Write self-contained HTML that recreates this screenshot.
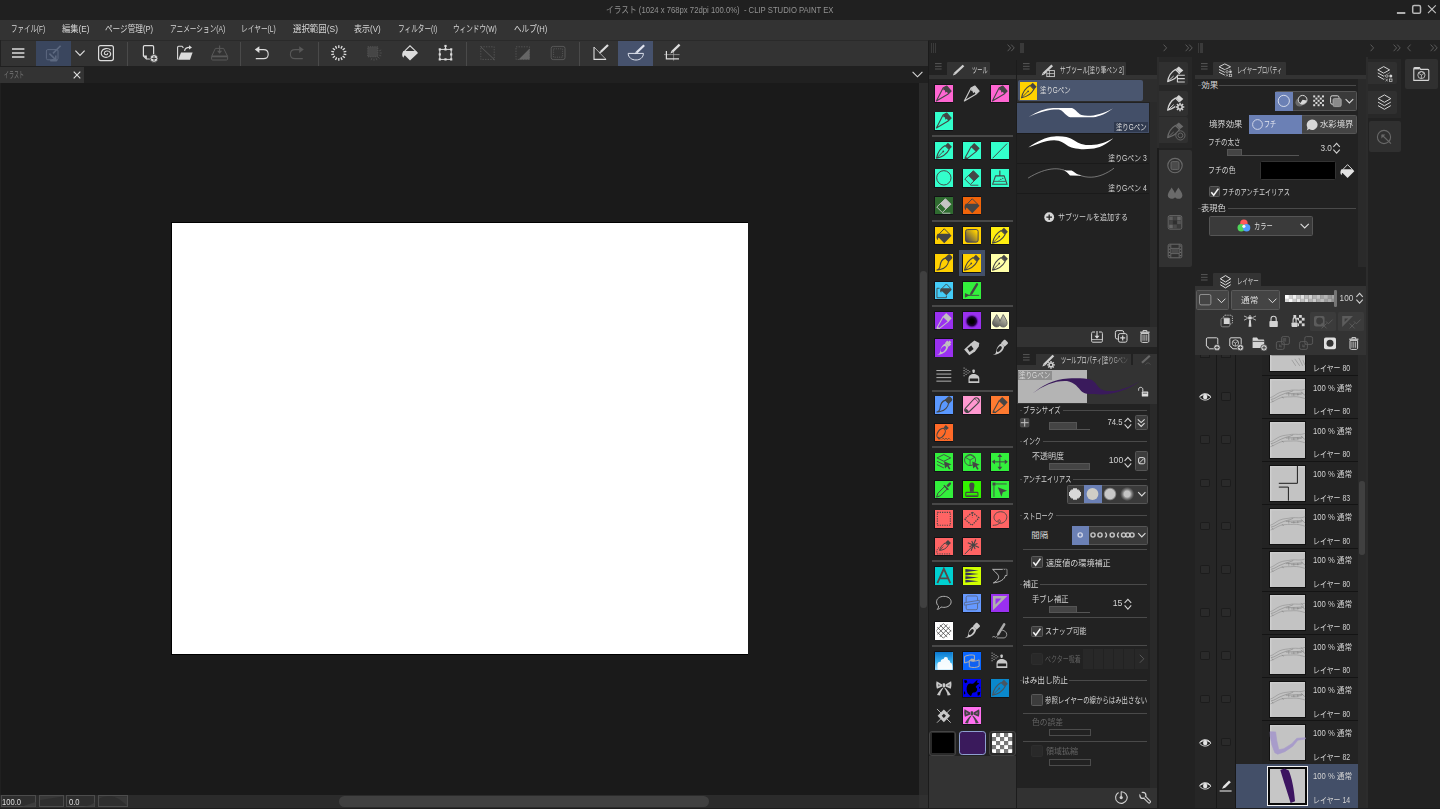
<!DOCTYPE html>
<html lang="ja"><head><meta charset="utf-8"><title>CLIP STUDIO PAINT EX</title>
<style>
html,body{margin:0;padding:0;background:#222;}
body{width:1440px;height:809px;overflow:hidden;position:relative;font-family:"Liberation Sans","Noto Sans CJK JP",sans-serif;}
#app{position:absolute;left:0;top:0;width:1440px;height:809px;overflow:hidden;background:#222;}
#app div,#app svg,#app span.t{position:absolute;box-sizing:border-box;}
#app span.t{white-space:nowrap;display:block;}
#app svg{overflow:visible;}
</style></head><body><div id="app">
<div style="left:0.00px;top:0.00px;width:1440.00px;height:19.70px;background:#202020;"></div>
<span class="t" style="top:3.70px;font-size:9px;line-height:12.60px;color:#929292;left:606.40px;transform-origin:0 50%;transform:scaleX(0.857);">イラスト (1024 x 768px 72dpi 100.0%)&nbsp; - CLIP STUDIO PAINT EX</span>
<svg style="left:1394.00px;top:3.00px;" width="44.00" height="14.00" viewBox="0 0 44 14"><path d="M2.9 10h8.4" stroke="#b8b8b8" stroke-width="1.9"/><rect x="18.7" y="2.5" width="7.8" height="7.8" rx="1.4" fill="none" stroke="#b8b8b8" stroke-width="1.5"/><path d="M34 2.4l7.8 7.8m0-7.8l-7.8 7.8" stroke="#c4c4c4" stroke-width="1.1"/></svg>
<div style="left:0.00px;top:19.70px;width:1440.00px;height:20.60px;background:#333;"></div>
<span class="t" style="top:23.16px;font-size:9.2px;line-height:12.88px;color:#d6d6d6;left:11.25px;transform-origin:0 50%;transform:scaleX(0.703);">ファイル(F)</span>
<span class="t" style="top:23.16px;font-size:9.2px;line-height:12.88px;color:#d6d6d6;left:61.75px;transform-origin:0 50%;transform:scaleX(0.895);">編集(E)</span>
<span class="t" style="top:23.16px;font-size:9.2px;line-height:12.88px;color:#d6d6d6;left:105.00px;transform-origin:0 50%;transform:scaleX(0.828);">ページ管理(P)</span>
<span class="t" style="top:23.16px;font-size:9.2px;line-height:12.88px;color:#d6d6d6;left:170.00px;transform-origin:0 50%;transform:scaleX(0.724);">アニメーション(A)</span>
<span class="t" style="top:23.16px;font-size:9.2px;line-height:12.88px;color:#d6d6d6;left:241.25px;transform-origin:0 50%;transform:scaleX(0.729);">レイヤー(L)</span>
<span class="t" style="top:23.16px;font-size:9.2px;line-height:12.88px;color:#d6d6d6;left:292.50px;transform-origin:0 50%;transform:scaleX(0.918);">選択範囲(S)</span>
<span class="t" style="top:23.16px;font-size:9.2px;line-height:12.88px;color:#d6d6d6;left:354.00px;transform-origin:0 50%;transform:scaleX(0.871);">表示(V)</span>
<span class="t" style="top:23.16px;font-size:9.2px;line-height:12.88px;color:#d6d6d6;left:397.50px;transform-origin:0 50%;transform:scaleX(0.722);">フィルター(I)</span>
<span class="t" style="top:23.16px;font-size:9.2px;line-height:12.88px;color:#d6d6d6;left:452.50px;transform-origin:0 50%;transform:scaleX(0.721);">ウィンドウ(W)</span>
<span class="t" style="top:23.16px;font-size:9.2px;line-height:12.88px;color:#d6d6d6;left:513.50px;transform-origin:0 50%;transform:scaleX(0.825);">ヘルプ(H)</span>
<div style="left:0.00px;top:40.30px;width:927.70px;height:25.90px;background:#333;border-top:0.8px solid #2a2a2a;"></div>
<div style="left:0.00px;top:40.00px;width:1.00px;height:26.00px;background:#222;"></div>
<div style="left:36.00px;top:40.80px;width:35.30px;height:25.20px;background:#3a465e;"></div>
<div style="left:618.30px;top:40.80px;width:35.00px;height:25.20px;background:#46526d;"></div>
<div style="left:127.10px;top:41.50px;width:0.90px;height:24.00px;background:#4a4a4a;"></div>
<div style="left:240.10px;top:41.50px;width:0.90px;height:24.00px;background:#4a4a4a;"></div>
<div style="left:317.60px;top:41.50px;width:0.90px;height:24.00px;background:#4a4a4a;"></div>
<div style="left:466.40px;top:41.50px;width:0.90px;height:24.00px;background:#4a4a4a;"></div>
<div style="left:579.10px;top:41.50px;width:0.90px;height:24.00px;background:#4a4a4a;"></div>
<svg style="left:0.00px;top:0.00px;" width="1440.00" height="809.00" viewBox="0 0 1440 809"><path d="M12 49h12.4M12 53h12.4M12 57h12.4" stroke="#dcdcdc" stroke-width="1.5"/><rect x="46.4" y="49.6" width="11.6" height="10.2" rx="1.4" fill="none" stroke="#5d6980" stroke-width="1"/><path d="M53 53.4L60.6 45.8" stroke="#5d6980" stroke-width="1.6"/><path d="M49.4 53.6L55.6 59.6M55.8 55.6V59.8H51.6" fill="none" stroke="#5d6980" stroke-width="1.5"/><path d="M50 59.8h8l-1.4 1.6h-6.2z" fill="#5d6980"/><path d="M75.4 50.6L80 55.4L84.6 50.6" fill="none" stroke="#dcdcdc" stroke-width="1.2"/><rect x="98.6" y="45.6" width="14.8" height="15" rx="2" fill="none" stroke="#dcdcdc" stroke-width="1.2"/><path d="M110.6 50.2C108.6 47.6 102.6 48 101.4 52.2C100.4 56.4 105.6 58.8 109.2 56.4C112.2 54.2 110.2 50.6 106.6 51C103.8 51.4 103.6 54.6 106 54.8C107.2 54.8 107.8 54 107.6 53.2" fill="none" stroke="#dcdcdc" stroke-width="1.1"/><path d="M146.4 59H152.6C153.2 59 153.6 58.6 153.6 58V46.8C153.6 46 153.2 45.6 152.4 45.6H144.6C143.8 45.6 143.4 46 143.4 46.8V56z" fill="none" stroke="#dcdcdc" stroke-width="1.2"/><path d="M143.4 55.6H146.8V59z" fill="#dcdcdc"/><circle cx="154" cy="58.4" r="3.9" fill="#dcdcdc" stroke="#333" stroke-width="0.8"/><path d="M154 56v4.8M151.6 58.4h4.8" stroke="#333" stroke-width="1"/><path d="M177.6 59.4V47.2C177.6 46.6 178 46.2 178.6 46.2H182L183.4 47.8" fill="none" stroke="#dcdcdc" stroke-width="1.1"/><path d="M178.2 59.8L181 52.4H192.6L190 59.8z" fill="#dcdcdc"/><path d="M184.6 51C184.8 48.6 186.6 47.4 189.6 47.4" fill="none" stroke="#dcdcdc" stroke-width="1.1"/><path d="M189 45.2L192 47.4L189 49.6z" fill="#dcdcdc"/><path d="M211.6 56.4L215.4 48.4H223.6L227.6 56.4V59C227.6 59.6 227.2 60 226.6 60H212.6C212 60 211.6 59.6 211.6 59z" fill="none" stroke="#585858" stroke-width="1"/><path d="M212 56.4H227.4" stroke="#585858" stroke-width="1.8"/><path d="M219.6 45.6V52.6" stroke="#585858" stroke-width="1.1"/><path d="M217 50.8L219.6 53.8L222.2 50.8z" fill="#585858"/><path d="M255.8 58.6H263.6C266.6 58.6 268.2 56.6 268.2 54.2C268.2 51.6 266.4 49.6 263.6 49.6H259" fill="none" stroke="#dcdcdc" stroke-width="1.1"/><path d="M254.8 49.6L259.4 46.2V53z" fill="#dcdcdc"/><path d="M302.8 58.6H295C292 58.6 290.4 56.6 290.4 54.2C290.4 51.6 292.2 49.6 295 49.6H299.6" fill="none" stroke="#585858" stroke-width="1.1"/><path d="M303.8 49.6L299.2 46.2V53z" fill="#585858"/><path d="M343.58 54.09L346.31 54.71" stroke="#dcdcdc" stroke-width="1.35"/><path d="M342.63 56.06L344.82 57.80" stroke="#dcdcdc" stroke-width="1.35"/><path d="M340.93 57.41L342.14 59.94" stroke="#dcdcdc" stroke-width="1.35"/><path d="M338.80 57.90L338.80 60.70" stroke="#dcdcdc" stroke-width="1.35"/><path d="M336.67 57.41L335.46 59.94" stroke="#dcdcdc" stroke-width="1.35"/><path d="M334.97 56.06L332.78 57.80" stroke="#dcdcdc" stroke-width="1.35"/><path d="M334.02 54.09L331.29 54.71" stroke="#dcdcdc" stroke-width="1.35"/><path d="M334.02 51.91L331.29 51.29" stroke="#dcdcdc" stroke-width="1.35"/><path d="M334.97 49.94L332.78 48.20" stroke="#dcdcdc" stroke-width="1.35"/><path d="M336.67 48.59L335.46 46.06" stroke="#dcdcdc" stroke-width="1.35"/><path d="M338.80 48.10L338.80 45.30" stroke="#dcdcdc" stroke-width="1.35"/><path d="M340.93 48.59L342.14 46.06" stroke="#dcdcdc" stroke-width="1.35"/><path d="M342.63 49.94L344.82 48.20" stroke="#dcdcdc" stroke-width="1.35"/><path d="M343.58 51.91L346.31 51.29" stroke="#dcdcdc" stroke-width="1.35"/><rect x="367.8" y="46.8" width="10" height="10" fill="#464646" stroke="#585858" stroke-width="0.9" stroke-dasharray="1.2 1"/><path d="M379.17 50.86L381.21 50.02" stroke="#4c4c4c" stroke-width="1"/><path d="M379.60 53.00L381.80 53.00" stroke="#4c4c4c" stroke-width="1"/><path d="M379.17 55.14L381.21 55.98" stroke="#4c4c4c" stroke-width="1"/><path d="M377.96 56.96L379.52 58.52" stroke="#4c4c4c" stroke-width="1"/><path d="M376.14 58.17L376.98 60.21" stroke="#4c4c4c" stroke-width="1"/><path d="M374.00 58.60L374.00 60.80" stroke="#4c4c4c" stroke-width="1"/><path d="M371.86 58.17L371.02 60.21" stroke="#4c4c4c" stroke-width="1"/><path d="M404.6 51.2L410 45.8L415.6 51.2" fill="none" stroke="#dcdcdc" stroke-width="1.1"/><path d="M403.4 51H416.4L418 53L410 60.6L405 55.6C404.2 55 403.8 55.8 403.8 57.6C402 57 401.6 53.4 403.4 51z" fill="#dcdcdc"/><rect x="439.8" y="49.4" width="11.4" height="10" fill="none" stroke="#dcdcdc" stroke-width="1"/><path d="M445.5 49.4V46.4" stroke="#dcdcdc" stroke-width="1"/><rect x="438.7" y="48.3" width="2.2" height="2.2" fill="#dcdcdc"/><rect x="444.4" y="48.3" width="2.2" height="2.2" fill="#dcdcdc"/><rect x="450.09999999999997" y="48.3" width="2.2" height="2.2" fill="#dcdcdc"/><rect x="438.7" y="53.3" width="2.2" height="2.2" fill="#dcdcdc"/><rect x="450.09999999999997" y="53.3" width="2.2" height="2.2" fill="#dcdcdc"/><rect x="438.7" y="58.3" width="2.2" height="2.2" fill="#dcdcdc"/><rect x="444.4" y="58.3" width="2.2" height="2.2" fill="#dcdcdc"/><rect x="450.09999999999997" y="58.3" width="2.2" height="2.2" fill="#dcdcdc"/><rect x="444.4" y="44.9" width="2.2" height="2.2" fill="#dcdcdc"/><rect x="480.8" y="46.8" width="13.4" height="12.6" fill="none" stroke="#585858" stroke-width="0.9" stroke-dasharray="1.3 1.3"/><path d="M480.4 46.4L494.8 60" stroke="#585858" stroke-width="1"/><rect x="516" y="46.8" width="13.4" height="12.6" fill="none" stroke="#585858" stroke-width="0.9" stroke-dasharray="1.3 1.3"/><path d="M529.6 48.6V59.6H518.6z" fill="#666"/><rect x="551.2" y="46.4" width="13.8" height="13.2" rx="2" fill="none" stroke="#585858" stroke-width="1"/><rect x="553.6" y="48.8" width="9" height="8.4" fill="none" stroke="#585858" stroke-width="0.9" stroke-dasharray="1.1 1.1"/><path d="M594 47V59.4H606" fill="none" stroke="#dcdcdc" stroke-width="1.1"/><path d="M594 47L606 59.4" stroke="#dcdcdc" stroke-width="0.7"/><path d="M600.9 51.8L608.0 45.0" stroke="#dcdcdc" stroke-width="2.2" stroke-linecap="butt"/><path d="M599.0 53.6L601.6 52.6L600.1 51.0z" fill="#dcdcdc"/><path d="M628.2 53.4H643.4C643.4 57.4 640.2 60 636 60C631.6 60 628.2 57.4 628.2 53.4z" fill="none" stroke="#dfe3ee" stroke-width="1"/><path d="M636.7 52.4L644.2 45.2" stroke="#dfe3ee" stroke-width="2.2" stroke-linecap="butt"/><path d="M634.8 54.2L637.4 53.2L635.9 51.6z" fill="#dfe3ee"/><path d="M664 54.6H679.6M673.6 50.8V60.6" fill="none" stroke="#a8a8a8" stroke-width="0.7"/><path d="M666.4 51V58.8H679" fill="none" stroke="#dcdcdc" stroke-width="1.2"/><path d="M672.3 51.6L679.6 44.6" stroke="#dcdcdc" stroke-width="2.2" stroke-linecap="butt"/><path d="M670.4 53.4L673.0 52.4L671.5 50.8z" fill="#dcdcdc"/></svg>
<div style="left:0.00px;top:66.20px;width:927.70px;height:17.20px;background:#202020;"></div>
<div style="left:0.00px;top:67.00px;width:84.30px;height:16.40px;background:#333;"></div>
<span class="t" style="top:69.10px;font-size:9px;line-height:12.60px;color:#7a7a7a;left:3.75px;transform-origin:0 50%;transform:scaleX(0.556);">イラスト</span>
<svg style="left:72.50px;top:71.20px;" width="8.00" height="8.00" viewBox="0 0 8 8"><path d="M0.7 0.7l6.6 6.6m0-6.6l-6.6 6.6" stroke="#e0e0e0" stroke-width="1.1" fill="none"/></svg>
<svg style="left:911.80px;top:70.90px;" width="11.00" height="7.00" viewBox="0 0 11 7"><path d="M0.6 0.8l4.9 5 4.9-5" stroke="#d8d8d8" stroke-width="1.1" fill="none"/></svg>
<div style="left:0.00px;top:83.40px;width:919.00px;height:711.60px;background:#1a1a1a;"></div>
<div style="left:0.00px;top:83.00px;width:1.00px;height:712.00px;background:#202020;"></div>
<div style="left:171.20px;top:222.00px;width:577.00px;height:433.00px;background:#000;"></div>
<div style="left:171.90px;top:222.70px;width:575.80px;height:431.70px;background:#fff;"></div>
<div style="left:918.70px;top:83.40px;width:9.50px;height:725.60px;background:#2b2b2b;"></div>
<div style="left:919.80px;top:271.00px;width:7.00px;height:336.50px;background:#404040;border-radius:3.5px;"></div>
<div style="left:0.00px;top:794.80px;width:919.00px;height:14.00px;background:#2b2b2b;"></div>
<div style="left:919.00px;top:794.80px;width:8.60px;height:14.00px;background:#303030;"></div>
<div style="left:0.00px;top:807.50px;width:928.00px;height:1.50px;background:#1d1d1d;"></div>
<div style="left:339.00px;top:795.60px;width:370.00px;height:11.20px;background:#404040;border-radius:5.6px;"></div>
<div style="left:1.40px;top:795.40px;width:34.80px;height:11.80px;background:#2e2e2e;border:0.8px solid #4c4c4c;"></div>
<div style="left:38.80px;top:795.40px;width:25.40px;height:11.80px;background:#2e2e2e;border:0.8px solid #4c4c4c;"></div>
<div style="left:65.80px;top:795.40px;width:29.60px;height:11.80px;background:#2e2e2e;border:0.8px solid #4c4c4c;"></div>
<div style="left:97.80px;top:795.40px;width:30.60px;height:11.80px;background:#2e2e2e;border:0.8px solid #4c4c4c;"></div>
<svg style="left:2.00px;top:796.00px;" width="34.00" height="11.00" viewBox="0 0 34 11"><path d="M20 10.5L33.5 6V10.5z" fill="#3c3c3c"/></svg>
<svg style="left:39.00px;top:796.00px;" width="25.00" height="11.00" viewBox="0 0 25 11"><path d="M1 4L24 0.5V0H1z" fill="#383838"/></svg>
<svg style="left:66.00px;top:796.00px;" width="29.00" height="11.00" viewBox="0 0 29 11"><path d="M17 10.5C24 10 27 8 28.5 6V10.5z" fill="#3c3c3c"/></svg>
<svg style="left:98.00px;top:796.00px;" width="30.00" height="11.00" viewBox="0 0 30 11"><path d="M1 3C4 0 14 0 18 1.5C22 3 26 7 29 10V0.5H1z" fill="#383838"/></svg>
<span class="t" style="top:796.10px;font-size:9px;line-height:12.60px;color:#ddd;left:2.20px;transform-origin:0 50%;transform:scaleX(0.848);">100.0</span>
<span class="t" style="top:796.10px;font-size:9px;line-height:12.60px;color:#ddd;left:68.90px;transform-origin:0 50%;transform:scaleX(0.846);">0.0</span>
<div style="left:927.70px;top:40.30px;width:512.30px;height:769.00px;background:#222;"></div>
<div style="left:927.60px;top:40.50px;width:1.60px;height:769.00px;background:#1b1b1b;"></div>
<div style="left:931.20px;top:43.20px;width:1.20px;height:9.60px;background:#3a3a3a;"></div>
<div style="left:933.10px;top:43.20px;width:1.20px;height:9.60px;background:#3a3a3a;"></div>
<div style="left:935.00px;top:43.20px;width:1.20px;height:9.60px;background:#3a3a3a;"></div>
<div style="left:1019.50px;top:43.20px;width:1.20px;height:9.60px;background:#3a3a3a;"></div>
<div style="left:1021.40px;top:43.20px;width:1.20px;height:9.60px;background:#3a3a3a;"></div>
<div style="left:1023.30px;top:43.20px;width:1.20px;height:9.60px;background:#3a3a3a;"></div>
<div style="left:1197.60px;top:43.20px;width:1.20px;height:9.60px;background:#3a3a3a;"></div>
<div style="left:1199.50px;top:43.20px;width:1.20px;height:9.60px;background:#3a3a3a;"></div>
<div style="left:1201.40px;top:43.20px;width:1.20px;height:9.60px;background:#3a3a3a;"></div>
<svg style="left:1007.00px;top:44.10px;" width="10.00" height="8.00" viewBox="0 0 10 8"><path d="M0.6 0.6L3.6 3.9L0.6 7.2M4.2 0.6L7.2 3.9L4.2 7.2" stroke="#5a5a5a" stroke-width="1" fill="none"/></svg>
<svg style="left:1162.50px;top:44.10px;" width="10.00" height="8.00" viewBox="0 0 10 8"><path d="M0.6 0.6L3.6 3.9L0.6 7.2" stroke="#5a5a5a" stroke-width="1" fill="none"/></svg>
<svg style="left:1184.50px;top:44.10px;" width="10.00" height="8.00" viewBox="0 0 10 8"><path d="M0.6 0.6L3.6 3.9L0.6 7.2M4.2 0.6L7.2 3.9L4.2 7.2" stroke="#5a5a5a" stroke-width="1" fill="none"/></svg>
<svg style="left:1369.80px;top:44.10px;" width="10.00" height="8.00" viewBox="0 0 10 8"><path d="M0.6 0.6L3.6 3.9L0.6 7.2" stroke="#5a5a5a" stroke-width="1" fill="none"/></svg>
<svg style="left:1392.80px;top:44.10px;" width="10.00" height="8.00" viewBox="0 0 10 8"><path d="M0.6 0.6L3.6 3.9L0.6 7.2M4.2 0.6L7.2 3.9L4.2 7.2" stroke="#5a5a5a" stroke-width="1" fill="none"/></svg>
<svg style="left:1407.00px;top:44.10px;" width="10.00" height="8.00" viewBox="0 0 10 8"><path d="M3.6 0.6L0.6 3.9L3.6 7.2" stroke="#5a5a5a" stroke-width="1" fill="none"/></svg>
<svg style="left:1429.50px;top:44.10px;" width="10.00" height="8.00" viewBox="0 0 10 8"><path d="M0.6 0.6L3.6 3.9L0.6 7.2M4.2 0.6L7.2 3.9L4.2 7.2" stroke="#5a5a5a" stroke-width="1" fill="none"/></svg>
<svg style="left:935.00px;top:63.00px;" width="7.00" height="7.00" viewBox="0 0 7 7"><path d="M0 0.6h6.6M0 3.3h6.6M0 6h6.6" stroke="#5c5c5c" stroke-width="0.9"/></svg>
<div style="left:947.00px;top:62.00px;width:42.50px;height:14.00px;background:#333;border-radius:1px 1px 0 0;"></div>
<div style="left:928.70px;top:75.00px;width:87.60px;height:4.40px;background:#333;"></div>
<svg style="left:0.00px;top:0.00px;" width="1440.00" height="809.00" viewBox="0 0 1440 809"><path d="M954.8 73.7L963.5 65.5" stroke="#cfcfcf" stroke-width="2.4" stroke-linecap="butt"/><path d="M952.9 75.5L955.6 74.6L954.0 72.8z" fill="#cfcfcf"/></svg>
<span class="t" style="top:64.72px;font-size:8.4px;line-height:11.76px;color:#cfcfcf;left:971.50px;transform-origin:0 50%;transform:scaleX(0.620);">ツール</span>
<div style="left:929.20px;top:756.40px;width:87.00px;height:52.00px;background:#333;"></div>
<div style="left:932.00px;top:135.20px;width:81.30px;height:1.60px;background:#484848;"></div>
<div style="left:932.00px;top:220.40px;width:81.30px;height:1.60px;background:#484848;"></div>
<div style="left:932.00px;top:305.40px;width:81.30px;height:1.60px;background:#484848;"></div>
<div style="left:932.00px;top:390.00px;width:81.30px;height:1.60px;background:#484848;"></div>
<div style="left:932.00px;top:446.40px;width:81.30px;height:1.60px;background:#484848;"></div>
<div style="left:932.00px;top:503.20px;width:81.30px;height:1.60px;background:#484848;"></div>
<div style="left:932.00px;top:560.00px;width:81.30px;height:1.60px;background:#484848;"></div>
<div style="left:932.00px;top:645.00px;width:81.30px;height:1.60px;background:#484848;"></div>
<div style="left:959.00px;top:250.00px;width:26.30px;height:26.30px;background:#435069;"></div>
<div style="left:934.20px;top:84.00px;width:19.10px;height:19.10px;background:#121216;border-radius:1px;"></div>
<div style="left:934.90px;top:84.70px;width:17.70px;height:17.70px;background:#ff66d2;"></div>
<svg style="left:934.90px;top:84.70px;" width="17.70" height="17.70" viewBox="0 0 18 18"><path d="M1.4 16.2L8.2 3L12 1L16.4 6.2L13 9.4z" fill="none" stroke="#454545" stroke-width="1.1" stroke-linejoin="round"/><path d="M8.4 2.8L12 1L16.4 6.2L13.4 9L12 6.8L10.8 7.8L9.8 5.2L8.6 5.4z" fill="#454545"/></svg>
<svg style="left:963.00px;top:84.70px;" width="17.70" height="17.70" viewBox="0 0 18 18"><path d="M1.4 16.2L8.2 3L12 1L16.4 6.2L13 9.4z" fill="none" stroke="#c8c8c8" stroke-width="1.2" stroke-linejoin="round"/><path d="M8.2 3L12 1L16.4 6.2L13 9.4L11.6 7.2L10.4 8.4L9.4 5.8L8.4 6z" fill="#c8c8c8"/></svg>
<div style="left:990.40px;top:84.00px;width:19.10px;height:19.10px;background:#121216;border-radius:1px;"></div>
<div style="left:991.10px;top:84.70px;width:17.70px;height:17.70px;background:#ff66d2;"></div>
<svg style="left:991.10px;top:84.70px;" width="17.70" height="17.70" viewBox="0 0 18 18"><path d="M1.4 16.2L8.2 3L12 1L16.4 6.2L13 9.4z" fill="none" stroke="#454545" stroke-width="1.1" stroke-linejoin="round"/><path d="M8.4 2.8L12 1L16.4 6.2L13.4 9L12 6.8L10.8 7.8L9.8 5.2L8.6 5.4z" fill="#454545"/></svg>
<div style="left:934.20px;top:111.60px;width:19.10px;height:19.10px;background:#121216;border-radius:1px;"></div>
<div style="left:934.90px;top:112.30px;width:17.70px;height:17.70px;background:#33ffcc;"></div>
<svg style="left:934.90px;top:112.30px;" width="17.70" height="17.70" viewBox="0 0 18 18"><path d="M1.4 16.2L8.2 3L12 1L16.4 6.2L13 9.4z" fill="none" stroke="#454545" stroke-width="1.1" stroke-linejoin="round"/><path d="M8.4 2.8L12 1L16.4 6.2L13.4 9L12 6.8L10.8 7.8L9.8 5.2L8.6 5.4z" fill="#454545"/></svg>
<div style="left:934.20px;top:141.00px;width:19.10px;height:19.10px;background:#121216;border-radius:1px;"></div>
<div style="left:934.90px;top:141.70px;width:17.70px;height:17.70px;background:#33ffcc;"></div>
<svg style="left:934.90px;top:141.70px;" width="17.70" height="17.70" viewBox="0 0 18 18"><path d="M1.6 16.4C2.6 11 6 6 10.4 3.6L14.4 7.6C12 12 7 15.4 1.6 16.4z" fill="none" stroke="#454545" stroke-width="1.1" stroke-linejoin="round"/><path d="M2 16L8 10" stroke="#454545" stroke-width="0.9"/><circle cx="8.4" cy="9.6" r="0.9" fill="#454545"/><path d="M10.6 3.2L13.2 0.8L17.2 4.8L14.8 7.4z" fill="#454545"/></svg>
<div style="left:962.30px;top:141.00px;width:19.10px;height:19.10px;background:#121216;border-radius:1px;"></div>
<div style="left:963.00px;top:141.70px;width:17.70px;height:17.70px;background:#33ffcc;"></div>
<svg style="left:963.00px;top:141.70px;" width="17.70" height="17.70" viewBox="0 0 18 18"><path d="M2.2 15.8L8.4 4.6L13.6 9.6L4.6 16.6z" fill="none" stroke="#454545" stroke-width="1.1" stroke-linejoin="round"/><path d="M8.2 4.4L11.4 1L17 6.4L13.8 9.8z" fill="#454545"/><path d="M1.6 16.8H5" stroke="#454545" stroke-width="1.1"/></svg>
<div style="left:990.40px;top:141.00px;width:19.10px;height:19.10px;background:#121216;border-radius:1px;"></div>
<div style="left:991.10px;top:141.70px;width:17.70px;height:17.70px;background:#33ffcc;"></div>
<svg style="left:991.10px;top:141.70px;" width="17.70" height="17.70" viewBox="0 0 18 18"><path d="M1.6 16.6L16.4 1.6" stroke="#454545" stroke-width="1"/></svg>
<div style="left:934.20px;top:168.50px;width:19.10px;height:19.10px;background:#121216;border-radius:1px;"></div>
<div style="left:934.90px;top:169.20px;width:17.70px;height:17.70px;background:#33ffcc;"></div>
<svg style="left:934.90px;top:169.20px;" width="17.70" height="17.70" viewBox="0 0 18 18"><circle cx="9" cy="9" r="7.3" fill="none" stroke="#454545" stroke-width="1"/></svg>
<div style="left:962.30px;top:168.50px;width:19.10px;height:19.10px;background:#121216;border-radius:1px;"></div>
<div style="left:963.00px;top:169.20px;width:17.70px;height:17.70px;background:#33ffcc;"></div>
<svg style="left:963.00px;top:169.20px;" width="17.70" height="17.70" viewBox="0 0 18 18"><path d="M10.6 1.8L16.2 7.4L7.4 15.8L1.8 10.2z" fill="none" stroke="#454545" stroke-width="1" stroke-linejoin="round"/><path d="M10.6 1.8L16.2 7.4L11 12.4L5.4 6.8z" fill="#454545"/><path d="M7.6 16.5H15.6" stroke="#454545" stroke-width="0.9"/></svg>
<div style="left:990.40px;top:168.50px;width:19.10px;height:19.10px;background:#121216;border-radius:1px;"></div>
<div style="left:991.10px;top:169.20px;width:17.70px;height:17.70px;background:#33ffcc;"></div>
<svg style="left:991.10px;top:169.20px;" width="17.70" height="17.70" viewBox="0 0 18 18"><path d="M9 1.6V7" stroke="#454545" stroke-width="1.2"/><path d="M4.6 7H13.4L16.4 15.6H1.6z" fill="none" stroke="#454545" stroke-width="1.1" stroke-linejoin="round"/><path d="M3 12.6H15" stroke="#454545" stroke-width="0.8"/><circle cx="10" cy="10.6" r="0.6" fill="#454545"/><circle cx="12" cy="9.6" r="0.6" fill="#454545"/><circle cx="8.2" cy="11.4" r="0.5" fill="#454545"/></svg>
<div style="left:934.20px;top:196.10px;width:19.10px;height:19.10px;background:#121216;border-radius:1px;"></div>
<div style="left:934.90px;top:196.80px;width:17.70px;height:17.70px;background:#2f6b30;"></div>
<svg style="left:934.90px;top:196.80px;" width="17.70" height="17.70" viewBox="0 0 18 18"><path d="M10.6 1.8L16.2 7.4L7.4 15.8L1.8 10.2z" fill="none" stroke="#c4c4c4" stroke-width="1" stroke-linejoin="round"/><path d="M10.6 1.8L16.2 7.4L11 12.4L5.4 6.8z" fill="#c4c4c4"/><path d="M7.6 16.5H15.6" stroke="#c4c4c4" stroke-width="0.9"/></svg>
<div style="left:962.30px;top:196.10px;width:19.10px;height:19.10px;background:#121216;border-radius:1px;"></div>
<div style="left:963.00px;top:196.80px;width:17.70px;height:17.70px;background:#f0640a;"></div>
<svg style="left:963.00px;top:196.80px;" width="17.70" height="17.70" viewBox="0 0 18 18"><path d="M4.4 7L9.4 1.8L14.6 7" fill="none" stroke="#454545" stroke-width="1" stroke-linejoin="round"/><path d="M2.8 6.8H15L16.8 9L9.4 16.6L4.2 11.2C3.4 10.6 3 11.4 3 13.2C1.4 12.6 1 9 2.8 6.8z" fill="#454545"/></svg>
<div style="left:934.20px;top:226.10px;width:19.10px;height:19.10px;background:#121216;border-radius:1px;"></div>
<div style="left:934.90px;top:226.80px;width:17.70px;height:17.70px;background:#ffd000;"></div>
<svg style="left:934.90px;top:226.80px;" width="17.70" height="17.70" viewBox="0 0 18 18"><path d="M4.4 7L9.4 1.8L14.6 7" fill="none" stroke="#454545" stroke-width="1" stroke-linejoin="round"/><path d="M2.8 6.8H15L16.8 9L9.4 16.6L4.2 11.2C3.4 10.6 3 11.4 3 13.2C1.4 12.6 1 9 2.8 6.8z" fill="#454545"/></svg>
<div style="left:962.30px;top:226.10px;width:19.10px;height:19.10px;background:#121216;border-radius:1px;"></div>
<div style="left:963.00px;top:226.80px;width:17.70px;height:17.70px;background:#ffd000;"></div>
<svg style="left:963.00px;top:226.80px;" width="17.70" height="17.70" viewBox="0 0 18 18"><defs><linearGradient id="gg" x1="0" y1="1" x2="1" y2="0"><stop offset="0" stop-color="#3a3a5a"/><stop offset="0.85" stop-color="#3a3a5a" stop-opacity="0"/></linearGradient></defs><rect x="2.6" y="2.6" width="12.8" height="12.8" rx="2" fill="url(#gg)" stroke="#3a3a5a" stroke-width="0.9"/></svg>
<div style="left:990.40px;top:226.10px;width:19.10px;height:19.10px;background:#121216;border-radius:1px;"></div>
<div style="left:991.10px;top:226.80px;width:17.70px;height:17.70px;background:#ffee10;"></div>
<svg style="left:991.10px;top:226.80px;" width="17.70" height="17.70" viewBox="0 0 18 18"><path d="M1.6 16.4C2.6 11 6 6 10.4 3.6L14.4 7.6C12 12 7 15.4 1.6 16.4z" fill="none" stroke="#454545" stroke-width="1.1" stroke-linejoin="round"/><path d="M2 16L8 10" stroke="#454545" stroke-width="0.9"/><circle cx="8.4" cy="9.6" r="0.9" fill="#454545"/><path d="M10.6 3.2L13.2 0.8L17.2 4.8L14.8 7.4z" fill="#454545"/></svg>
<div style="left:934.20px;top:253.60px;width:19.10px;height:19.10px;background:#121216;border-radius:1px;"></div>
<div style="left:934.90px;top:254.30px;width:17.70px;height:17.70px;background:#ffd000;"></div>
<svg style="left:934.90px;top:254.30px;" width="17.70" height="17.70" viewBox="0 0 18 18"><path d="M1.8 16.2C4.2 16 5 14.6 5.2 12C5.6 8 8 5 10.6 4.2L13.8 7.4C13.4 11 10 14.6 6 15.6C4.4 16.2 3 16.4 1.8 16.2z" fill="none" stroke="#454545" stroke-width="1.1" stroke-linejoin="round"/><path d="M10 3.8L13 0.9C13.8 0.2 15 0.2 15.8 0.9L17 2.2C17.8 3 17.8 4.2 17 5L14.2 7.8z" fill="#454545"/></svg>
<div style="left:962.30px;top:253.60px;width:19.10px;height:19.10px;background:#121216;border-radius:1px;"></div>
<div style="left:963.00px;top:254.30px;width:17.70px;height:17.70px;background:#ffd000;"></div>
<svg style="left:963.00px;top:254.30px;" width="17.70" height="17.70" viewBox="0 0 18 18"><path d="M1.6 16.4C2.6 11 6 6 10.4 3.6L14.4 7.6C12 12 7 15.4 1.6 16.4z" fill="none" stroke="#454545" stroke-width="1.1" stroke-linejoin="round"/><path d="M2 16L8 10" stroke="#454545" stroke-width="0.9"/><circle cx="8.4" cy="9.6" r="0.9" fill="#454545"/><path d="M10.6 3.2L13.2 0.8L17.2 4.8L14.8 7.4z" fill="#454545"/></svg>
<div style="left:990.40px;top:253.60px;width:19.10px;height:19.10px;background:#121216;border-radius:1px;"></div>
<div style="left:991.10px;top:254.30px;width:17.70px;height:17.70px;background:#ffffa8;"></div>
<svg style="left:991.10px;top:254.30px;" width="17.70" height="17.70" viewBox="0 0 18 18"><path d="M1.6 16.4C2.6 11 6 6 10.4 3.6L14.4 7.6C12 12 7 15.4 1.6 16.4z" fill="none" stroke="#454545" stroke-width="1.1" stroke-linejoin="round"/><path d="M2 16L8 10" stroke="#454545" stroke-width="0.9"/><circle cx="8.4" cy="9.6" r="0.9" fill="#454545"/><path d="M10.6 3.2L13.2 0.8L17.2 4.8L14.8 7.4z" fill="#454545"/></svg>
<div style="left:934.20px;top:281.10px;width:19.10px;height:19.10px;background:#121216;border-radius:1px;"></div>
<div style="left:934.90px;top:281.80px;width:17.70px;height:17.70px;background:#44ccf8;"></div>
<svg style="left:934.90px;top:281.80px;" width="17.70" height="17.70" viewBox="0 0 18 18"><path d="M7 6.6L11.6 2L16 6.6" fill="none" stroke="#454545" stroke-width="0.9"/><path d="M6 6.4H16L17 8L11.6 13.6L7.4 9.6C6.6 9.2 6.4 9.8 6.4 11C5 10.6 4.8 8 6 6.4z" fill="#454545"/><path d="M4.6 6.4H2V16H11.6V13.8" fill="none" stroke="#454545" stroke-width="0.9"/></svg>
<div style="left:962.30px;top:281.10px;width:19.10px;height:19.10px;background:#121216;border-radius:1px;"></div>
<div style="left:963.00px;top:281.80px;width:17.70px;height:17.70px;background:#33f03c;"></div>
<svg style="left:963.00px;top:281.80px;" width="17.70" height="17.70" viewBox="0 0 18 18"><path d="M8.6 11.6L14.2 2.4" stroke="#454545" stroke-width="2.4" stroke-linecap="round"/><path d="M2 11.2V16L6.6 13.6z" fill="#454545"/><path d="M2 13.6H16.4" stroke="#454545" stroke-width="0.9"/><path d="M6.6 13.6L9 11" stroke="#454545" stroke-width="0.9"/></svg>
<div style="left:934.20px;top:310.90px;width:19.10px;height:19.10px;background:#121216;border-radius:1px;"></div>
<div style="left:934.90px;top:311.60px;width:17.70px;height:17.70px;background:#9a30f0;"></div>
<svg style="left:934.90px;top:311.60px;" width="17.70" height="17.70" viewBox="0 0 18 18"><path d="M2.2 15.8L8.4 4.6L13.6 9.6L4.6 16.6z" fill="none" stroke="#c0c0c0" stroke-width="1.1" stroke-linejoin="round"/><path d="M8.2 4.4L11.4 1L17 6.4L13.8 9.8z" fill="#c0c0c0"/><path d="M1.6 16.8H5" stroke="#c0c0c0" stroke-width="1.1"/></svg>
<div style="left:962.30px;top:310.90px;width:19.10px;height:19.10px;background:#121216;border-radius:1px;"></div>
<div style="left:963.00px;top:311.60px;width:17.70px;height:17.70px;background:#9a30f0;"></div>
<svg style="left:963.00px;top:311.60px;" width="17.70" height="17.70" viewBox="0 0 18 18"><defs><radialGradient id="rg"><stop offset="0.3" stop-color="#000"/><stop offset="0.62" stop-color="#200040"/><stop offset="1" stop-color="#9933ff" stop-opacity="0"/></radialGradient></defs><circle cx="9" cy="9.4" r="7.6" fill="url(#rg)"/></svg>
<div style="left:990.40px;top:310.90px;width:19.10px;height:19.10px;background:#121216;border-radius:1px;"></div>
<div style="left:991.10px;top:311.60px;width:17.70px;height:17.70px;background:#ffffd0;"></div>
<svg style="left:991.10px;top:311.60px;" width="17.70" height="17.70" viewBox="0 0 18 18"><defs><linearGradient id="dg" x1="0.2" y1="1" x2="0.8" y2="0"><stop offset="0" stop-color="#555"/><stop offset="1" stop-color="#d0d0b8"/></linearGradient></defs><path d="M5.8 2.6C7.4 5.6 9.2 7.4 9 9.6C10 6.6 11.4 5.2 12.4 2.6C14.6 6.4 16.6 9 16.4 11.6C16.2 14.4 13.6 16.2 10.4 14.8C9.6 14.4 9.2 14 9 13.6C8.6 14.2 8.2 14.6 7.4 14.8C4.4 16 1.6 14 1.6 11.2C1.6 8.6 4 6 5.8 2.6z" fill="url(#dg)" stroke="#555" stroke-width="0.8"/></svg>
<div style="left:934.20px;top:338.40px;width:19.10px;height:19.10px;background:#121216;border-radius:1px;"></div>
<div style="left:934.90px;top:339.10px;width:17.70px;height:17.70px;background:#9a30f0;"></div>
<svg style="left:934.90px;top:339.10px;" width="17.70" height="17.70" viewBox="0 0 18 18"><path d="M1.8 16.2C4.2 16 5 14.6 5.4 12C5.8 8.6 8 5.6 10.6 4.6L13.4 7.6C13 11 10 14.6 6 15.4C4.4 16 3 16.4 1.8 16.2z" fill="#c0c0c0"/><ellipse cx="8.4" cy="10.2" rx="1.9" ry="3.6" transform="rotate(38 8.4 10.2)" fill="#9a30f0"/><path d="M10 4.2L12.4 1.6L13.6 2.8L14.8 1.6L16.6 3.4L15.4 4.6L16.4 5.6L13.8 8z" fill="#c0c0c0"/></svg>
<svg style="left:963.00px;top:339.10px;" width="17.70" height="17.70" viewBox="0 0 18 18"><path d="M1.2 10.6L8 4.4L11.6 1.6L16.6 4L16 7.6L12.2 12.6L6.4 16.6z" fill="#c8c8c8"/><path d="M4.4 9.6L8.4 6.6L10.8 10.2L6.8 13.2z" fill="#222"/></svg>
<svg style="left:991.10px;top:339.10px;" width="17.70" height="17.70" viewBox="0 0 18 18"><path d="M1.8 16.2C4.2 16 5 14.6 5.4 12C5.8 8.6 8 5.6 10.6 4.6L13.4 7.6C13 11 10 14.6 6 15.4C4.4 16 3 16.4 1.8 16.2z" fill="#c8c8c8"/><ellipse cx="8.4" cy="10.2" rx="1.7" ry="3.4" transform="rotate(38 8.4 10.2)" fill="#222"/><path d="M10 4.2L12.8 1.2C13.4 0.6 14.4 0.6 15 1.2L16.8 3C17.4 3.6 17.4 4.6 16.8 5.2L13.8 8z" fill="#c8c8c8"/></svg>
<svg style="left:934.90px;top:366.60px;" width="17.70" height="17.70" viewBox="0 0 18 18"><path d="M1.4 3.6H16.6M1.4 7.2H16.6M1.4 10.8H16.6M1.4 14.4H16.6" stroke="#b4b4b4" stroke-width="1"/></svg>
<svg style="left:963.00px;top:366.60px;" width="17.70" height="17.70" viewBox="0 0 18 18"><rect x="0.6" y="0.6" width="1" height="1" fill="#c8c8c8"/><rect x="0.6" y="3.2" width="1" height="1" fill="#c8c8c8"/><rect x="0.6" y="5.8" width="1" height="1" fill="#c8c8c8"/><rect x="0.6" y="8.4" width="1" height="1" fill="#c8c8c8"/><rect x="2.6" y="1.8" width="1" height="1" fill="#c8c8c8"/><rect x="2.6" y="4.4" width="1" height="1" fill="#c8c8c8"/><rect x="2.6" y="7" width="1" height="1" fill="#c8c8c8"/><rect x="4.6" y="3" width="1" height="1" fill="#c8c8c8"/><rect x="4.6" y="5.6" width="1" height="1" fill="#c8c8c8"/><rect x="6.4" y="4.4" width="1" height="1" fill="#c8c8c8"/><rect x="9.6" y="2.6" width="2.4" height="3.4" rx="0.8" fill="#c8c8c8"/><path d="M5.6 16.4V11.6C5.6 8.6 8 7 10.8 7C13.6 7 16.6 8.6 16.6 11.6V16.4z" fill="#c8c8c8"/><rect x="6.8" y="11.6" width="8.6" height="3" rx="0.4" fill="#222"/></svg>
<div style="left:934.20px;top:395.50px;width:19.10px;height:19.10px;background:#121216;border-radius:1px;"></div>
<div style="left:934.90px;top:396.20px;width:17.70px;height:17.70px;background:#5a98ff;"></div>
<svg style="left:934.90px;top:396.20px;" width="17.70" height="17.70" viewBox="0 0 18 18"><path d="M1.8 16.2C4.2 16 5 14.6 5.2 12C5.6 8 8 5 10.6 4.2L13.8 7.4C13.4 11 10 14.6 6 15.6C4.4 16.2 3 16.4 1.8 16.2z" fill="none" stroke="#454545" stroke-width="1.1" stroke-linejoin="round"/><path d="M10 3.8L13 0.9C13.8 0.2 15 0.2 15.8 0.9L17 2.2C17.8 3 17.8 4.2 17 5L14.2 7.8z" fill="#454545"/></svg>
<div style="left:962.30px;top:395.50px;width:19.10px;height:19.10px;background:#121216;border-radius:1px;"></div>
<div style="left:963.00px;top:396.20px;width:17.70px;height:17.70px;background:#ff98d0;"></div>
<svg style="left:963.00px;top:396.20px;" width="17.70" height="17.70" viewBox="0 0 18 18"><path d="M2.6 12.4L11.4 2.8C12.6 1.6 14.4 1.6 15.6 2.8C16.8 4 16.8 5.8 15.6 7L6.2 16C5 16.8 3.4 17 2.4 16C1.4 15 1.6 13.6 2.6 12.4z" fill="none" stroke="#454545" stroke-width="1.1"/><path d="M11.6 2.8C13.4 3.6 15 5.2 15.6 7" fill="none" stroke="#454545" stroke-width="0.8"/><path d="M2.4 12.8C4 13.2 5.6 14.8 6 16.2L3.8 17L2 15.4z" fill="#454545"/></svg>
<div style="left:990.40px;top:395.50px;width:19.10px;height:19.10px;background:#121216;border-radius:1px;"></div>
<div style="left:991.10px;top:396.20px;width:17.70px;height:17.70px;background:#ff7a30;"></div>
<svg style="left:991.10px;top:396.20px;" width="17.70" height="17.70" viewBox="0 0 18 18"><path d="M2.2 15.8L8.4 4.6L13.6 9.6L4.6 16.6z" fill="none" stroke="#454545" stroke-width="1.1" stroke-linejoin="round"/><path d="M8.2 4.4L11.4 1L17 6.4L13.8 9.8z" fill="#454545"/><path d="M1.6 16.8H5" stroke="#454545" stroke-width="1.1"/></svg>
<div style="left:934.20px;top:423.00px;width:19.10px;height:19.10px;background:#121216;border-radius:1px;"></div>
<div style="left:934.90px;top:423.70px;width:17.70px;height:17.70px;background:#ff6a28;"></div>
<svg style="left:934.90px;top:423.70px;" width="17.70" height="17.70" viewBox="0 0 18 18"><ellipse cx="6.2" cy="9.4" rx="3.4" ry="5.6" transform="rotate(35 6.2 9.4)" fill="none" stroke="#454545" stroke-width="1.1"/><path d="M8.8 3.6L11 1L14 4L11.6 6.2z" fill="#454545"/><path d="M3.6 13L5.8 15.4L3.4 15.8z" fill="#454545"/><path d="M7 15.8l1.4-1.4 1.4 1.4 1.4-1.4 1.4 1.4 1.4-1.4 1.4 1.4" fill="none" stroke="#454545" stroke-width="0.8"/></svg>
<div style="left:934.20px;top:452.50px;width:19.10px;height:19.10px;background:#121216;border-radius:1px;"></div>
<div style="left:934.90px;top:453.20px;width:17.70px;height:17.70px;background:#33f03c;"></div>
<svg style="left:934.90px;top:453.20px;" width="17.70" height="17.70" viewBox="0 0 18 18"><path d="M9 1.6L16 5L9 8.4L2 5z" fill="none" stroke="#454545" stroke-width="0.9" stroke-linejoin="round"/><path d="M2 8.4L9 11.8L10 11.3M2 11.8L9 15.2" fill="none" stroke="#454545" stroke-width="0.9" stroke-linejoin="round"/><path d="M9.2 8.4l7.6 3.4-3 0.9 1.9 3.4-1.4 0.8-1.9-3.4-2.2 2.2z" fill="#454545"/></svg>
<div style="left:962.30px;top:452.50px;width:19.10px;height:19.10px;background:#121216;border-radius:1px;"></div>
<div style="left:963.00px;top:453.20px;width:17.70px;height:17.70px;background:#33f03c;"></div>
<svg style="left:963.00px;top:453.20px;" width="17.70" height="17.70" viewBox="0 0 18 18"><circle cx="7.2" cy="7.2" r="5.6" fill="none" stroke="#454545" stroke-width="0.9"/><path d="M7.2 7.2V12.8M7.2 7.2L2.4 4.4M7.2 7.2L12 4.4M2.4 4.4L7.2 1.8L12 4.4" fill="none" stroke="#454545" stroke-width="0.8"/><path d="M9.4 8.6l7.6 3.4-3 0.9 1.9 3.4-1.4 0.8-1.9-3.4-2.2 2.2z" fill="#454545"/></svg>
<div style="left:990.40px;top:452.50px;width:19.10px;height:19.10px;background:#121216;border-radius:1px;"></div>
<div style="left:991.10px;top:453.20px;width:17.70px;height:17.70px;background:#33f03c;"></div>
<svg style="left:991.10px;top:453.20px;" width="17.70" height="17.70" viewBox="0 0 18 18"><path d="M9 3V15M3 9H15" stroke="#454545" stroke-width="1"/><path d="M9 0.8L11.4 4H6.6zM9 17.2L11.4 14H6.6zM0.8 9L4 6.6V11.4zM17.2 9L14 6.6V11.4z" fill="#454545"/></svg>
<div style="left:934.20px;top:479.90px;width:19.10px;height:19.10px;background:#121216;border-radius:1px;"></div>
<div style="left:934.90px;top:480.60px;width:17.70px;height:17.70px;background:#33f03c;"></div>
<svg style="left:934.90px;top:480.60px;" width="17.70" height="17.70" viewBox="0 0 18 18"><path d="M1.6 16.4L3 12.4L10 5.4L12.6 8L5.6 15z" fill="none" stroke="#454545" stroke-width="1" stroke-linejoin="round"/><path d="M9 4.4L13.6 9" stroke="#454545" stroke-width="1.4"/><path d="M11.6 4.6L14.4 1.8C15.2 1 16.4 1.6 16.4 2.4C16.4 3 16.2 3.4 15.8 3.8L13.2 6.4z" fill="#454545"/></svg>
<div style="left:962.30px;top:479.90px;width:19.10px;height:19.10px;background:#121216;border-radius:1px;"></div>
<div style="left:963.00px;top:480.60px;width:17.70px;height:17.70px;background:#33f400;"></div>
<svg style="left:963.00px;top:480.60px;" width="17.70" height="17.70" viewBox="0 0 18 18"><path d="M9 1.4C11 1.4 12 3 11.6 5.4C11.2 7.6 10.8 9 11 11H7C7.2 9 6.8 7.6 6.4 5.4C6 3 7 1.4 9 1.4z" fill="#454545"/><rect x="2.8" y="11.6" width="12.4" height="4.2" rx="0.8" fill="none" stroke="#454545" stroke-width="1.1"/><path d="M3.4 14.6H14.6" stroke="#454545" stroke-width="0.8"/></svg>
<div style="left:990.40px;top:479.90px;width:19.10px;height:19.10px;background:#121216;border-radius:1px;"></div>
<div style="left:991.10px;top:480.60px;width:17.70px;height:17.70px;background:#33f03c;"></div>
<svg style="left:991.10px;top:480.60px;" width="17.70" height="17.70" viewBox="0 0 18 18"><rect x="1.6" y="1.6" width="3" height="3" fill="#454545"/><path d="M3 4.6V16.2M4.6 3H16" stroke="#454545" stroke-width="0.9"/><path d="M7 6.4L16.4 10L12 11.4L10.6 16z" fill="#454545"/></svg>
<div style="left:934.20px;top:509.50px;width:19.10px;height:19.10px;background:#121216;border-radius:1px;"></div>
<div style="left:934.90px;top:510.20px;width:17.70px;height:17.70px;background:#ff6464;"></div>
<svg style="left:934.90px;top:510.20px;" width="17.70" height="17.70" viewBox="0 0 18 18"><rect x="2.4" y="2.4" width="13.2" height="13.2" fill="none" stroke="#454545" stroke-width="1.1" stroke-dasharray="1.2 1.2"/></svg>
<div style="left:962.30px;top:509.50px;width:19.10px;height:19.10px;background:#121216;border-radius:1px;"></div>
<div style="left:963.00px;top:510.20px;width:17.70px;height:17.70px;background:#ff6464;"></div>
<svg style="left:963.00px;top:510.20px;" width="17.70" height="17.70" viewBox="0 0 18 18"><path d="M9.6 2.2L16.2 8L9 15.6L1.8 9.2zM9.6 2.2V7.4" fill="none" stroke="#454545" stroke-width="1.2" stroke-dasharray="1.5 1"/></svg>
<div style="left:990.40px;top:509.50px;width:19.10px;height:19.10px;background:#121216;border-radius:1px;"></div>
<div style="left:991.10px;top:510.20px;width:17.70px;height:17.70px;background:#ff6464;"></div>
<svg style="left:991.10px;top:510.20px;" width="17.70" height="17.70" viewBox="0 0 18 18"><path d="M6.8 12.2C3 11 2 7 4.2 4.2C6.8 1 12.6 1 15 4C17.4 7.2 15.6 12 11 13.4C9.4 13.8 8.4 13.2 7.6 12.4C6.6 11.2 7.4 9.6 8.6 10C9.8 10.4 9.8 12.4 8 14C6.6 15.2 4 15.6 1.8 15.6" fill="none" stroke="#454545" stroke-width="0.9"/></svg>
<div style="left:934.20px;top:536.90px;width:19.10px;height:19.10px;background:#121216;border-radius:1px;"></div>
<div style="left:934.90px;top:537.60px;width:17.70px;height:17.70px;background:#ff6464;"></div>
<svg style="left:934.90px;top:537.60px;" width="17.70" height="17.70" viewBox="0 0 18 18"><path d="M4.6 12.6C5.4 9.6 7.4 6.8 10.4 5L13.2 7.8C11.6 10.8 8 12.4 4.6 12.6z" fill="none" stroke="#454545" stroke-width="1" stroke-linejoin="round"/><path d="M5 12.2L8.4 8.8" stroke="#454545" stroke-width="0.8"/><path d="M10.6 4.6L13.2 2L16.2 5L13.6 7.6z" fill="#454545"/><path d="M4.2 9.6C2 11 1.4 13 2.2 16.2H16" fill="none" stroke="#454545" stroke-width="1" stroke-dasharray="1.3 1.1"/></svg>
<div style="left:962.30px;top:536.90px;width:19.10px;height:19.10px;background:#121216;border-radius:1px;"></div>
<div style="left:963.00px;top:537.60px;width:17.70px;height:17.70px;background:#ff6464;"></div>
<svg style="left:963.00px;top:537.60px;" width="17.70" height="17.70" viewBox="0 0 18 18"><path d="M1.8 16.4L9 9" stroke="#454545" stroke-width="1"/><path d="M10.6 7.2L16.3 9.6" stroke="#454545" stroke-width="1.1"/><path d="M10.6 7.2L12.3 11.3" stroke="#454545" stroke-width="1.1"/><path d="M10.6 7.2L8.2 12.9" stroke="#454545" stroke-width="1.1"/><path d="M10.6 7.2L6.5 8.9" stroke="#454545" stroke-width="1.1"/><path d="M10.6 7.2L4.9 4.8" stroke="#454545" stroke-width="1.1"/><path d="M10.6 7.2L8.9 3.1" stroke="#454545" stroke-width="1.1"/><path d="M10.6 7.2L13.0 1.5" stroke="#454545" stroke-width="1.1"/><path d="M10.6 7.2L14.7 5.5" stroke="#454545" stroke-width="1.1"/><circle cx="10.6" cy="7.2" r="1.6" fill="#454545"/></svg>
<div style="left:934.20px;top:566.30px;width:19.10px;height:19.10px;background:#121216;border-radius:1px;"></div>
<div style="left:934.90px;top:567.00px;width:17.70px;height:17.70px;background:#00d0d0;"></div>
<svg style="left:934.90px;top:567.00px;" width="17.70" height="17.70" viewBox="0 0 18 18"><path d="M2.4 16.4L9 1.8L15.6 16.4M4.8 11.6H13.2" fill="none" stroke="#5a4848" stroke-width="1.8" stroke-linejoin="miter"/></svg>
<div style="left:962.30px;top:566.30px;width:19.10px;height:19.10px;background:#121216;border-radius:1px;"></div>
<div style="left:963.00px;top:567.00px;width:17.70px;height:17.70px;background:#d0ff00;"></div>
<svg style="left:963.00px;top:567.00px;" width="17.70" height="17.70" viewBox="0 0 18 18"><path d="M2.4 2.1L16 3.6L2.4 5.1z" fill="#33305a"/><path d="M2.4 5.7L16 7.2L2.4 8.7z" fill="#33305a"/><path d="M2.4 9.3L16 10.8L2.4 12.3z" fill="#33305a"/><path d="M2.4 12.9L16 14.4L2.4 15.9z" fill="#33305a"/></svg>
<svg style="left:991.10px;top:567.00px;" width="17.70" height="17.70" viewBox="0 0 18 18"><path d="M1.6 2.4H16.2V8.6H14.6C14 12.6 9 15.6 2.4 16.2C7 13.8 9.4 10.6 6.6 7.4C5.4 5.8 3.4 4 1.6 2.4z" fill="none" stroke="#c8c8c8" stroke-width="0.9"/><path d="M12 2.6H16V8.4" fill="none" stroke="#222" stroke-width="1.1" stroke-dasharray="1 1"/></svg>
<svg style="left:934.90px;top:594.40px;" width="17.70" height="17.70" viewBox="0 0 18 18"><path d="M9 2.4C13.4 2.4 16.4 4.8 16.4 8C16.4 11.2 13.2 13.6 9 13.6C8 13.6 7 13.5 6.2 13.2C5.4 14.6 4 15.4 2.2 15.6C3.2 14.8 3.8 13.6 3.6 12.2C2.2 11.2 1.6 9.6 1.6 8C1.6 4.8 4.6 2.4 9 2.4z" fill="none" stroke="#b4b4b4" stroke-width="1"/></svg>
<div style="left:962.30px;top:593.70px;width:19.10px;height:19.10px;background:#121216;border-radius:1px;"></div>
<div style="left:963.00px;top:594.40px;width:17.70px;height:17.70px;background:#6699ff;"></div>
<svg style="left:963.00px;top:594.40px;" width="17.70" height="17.70" viewBox="0 0 18 18"><rect x="3.2" y="2" width="11.6" height="14" rx="1.6" fill="none" stroke="#5a6a90" stroke-width="1"/><path d="M1.4 8.8L16.6 6.4V9L1.4 11.4z" fill="#6699ff" stroke="#5a6a90" stroke-width="0.9" stroke-linejoin="round"/></svg>
<div style="left:990.40px;top:593.70px;width:19.10px;height:19.10px;background:#121216;border-radius:1px;"></div>
<div style="left:991.10px;top:594.40px;width:17.70px;height:17.70px;background:#9a30f0;"></div>
<svg style="left:991.10px;top:594.40px;" width="17.70" height="17.70" viewBox="0 0 18 18"><path d="M2 2H16.6L2 16.6zM4.6 4.6V10.6L10.6 4.6z" fill="#b0b0b0" fill-rule="evenodd"/></svg>
<div style="left:934.20px;top:621.20px;width:19.10px;height:19.10px;background:#121216;border-radius:1px;"></div>
<div style="left:934.90px;top:621.90px;width:17.70px;height:17.70px;background:#fff;"></div>
<svg style="left:934.90px;top:621.90px;" width="17.70" height="17.70" viewBox="0 0 18 18"><defs><clipPath id="hc"><circle cx="9" cy="9" r="7.6"/></clipPath></defs><g clip-path="url(#hc)"><path d="M-18 0L0 18M0 0L-18 18" stroke="#3c3c3c" stroke-width="0.75"/><path d="M-13 0L5 18M5 0L-13 18" stroke="#3c3c3c" stroke-width="0.75"/><path d="M-8 0L10 18M10 0L-8 18" stroke="#3c3c3c" stroke-width="0.75"/><path d="M-3 0L15 18M15 0L-3 18" stroke="#3c3c3c" stroke-width="0.75"/><path d="M2 0L20 18M20 0L2 18" stroke="#3c3c3c" stroke-width="0.75"/><path d="M7 0L25 18M25 0L7 18" stroke="#3c3c3c" stroke-width="0.75"/><path d="M12 0L30 18M30 0L12 18" stroke="#3c3c3c" stroke-width="0.75"/><path d="M17 0L35 18M35 0L17 18" stroke="#3c3c3c" stroke-width="0.75"/></g></svg>
<svg style="left:963.00px;top:621.90px;" width="17.70" height="17.70" viewBox="0 0 18 18"><path d="M1.8 16.2C4.2 16 5 14.6 5.4 12C5.8 8.6 8 5.6 10.6 4.6L13.4 7.6C13 11 10 14.6 6 15.4C4.4 16 3 16.4 1.8 16.2z" fill="#c8c8c8"/><ellipse cx="8.4" cy="10.2" rx="1.7" ry="3.4" transform="rotate(38 8.4 10.2)" fill="#222"/><path d="M10 4.2L12.8 1.2C13.4 0.6 14.4 0.6 15 1.2L16.8 3C17.4 3.6 17.4 4.6 16.8 5.2L13.8 8z" fill="#c8c8c8"/></svg>
<svg style="left:991.10px;top:621.90px;" width="17.70" height="17.70" viewBox="0 0 18 18"><path d="M7.4 12.4L13.4 2.4" stroke="#aaa" stroke-width="2.6" stroke-linecap="round"/><path d="M1.4 15.4C2.6 14.4 3.4 14.8 4.2 15.4C5 16 5.8 15 6.6 13.6" fill="none" stroke="#aaa" stroke-width="1"/><path d="M11.4 8.4C14 8.6 16 10.4 16 12.8C16 14.6 15 15.8 13.4 16.2H6" fill="none" stroke="#aaa" stroke-width="0.9"/></svg>
<div style="left:934.20px;top:651.30px;width:19.10px;height:19.10px;background:#121216;border-radius:1px;"></div>
<div style="left:934.90px;top:652.00px;width:17.70px;height:17.70px;background:#48b0f0;"></div>
<svg style="left:934.90px;top:652.00px;" width="17.70" height="17.70" viewBox="0 0 18 18"><defs><linearGradient id="cg" x1="0" y1="0" x2="0" y2="1"><stop offset="0" stop-color="#0a78d0"/><stop offset="0.55" stop-color="#38b0f0"/><stop offset="1" stop-color="#a8e0ff"/></linearGradient><filter id="cb"><feGaussianBlur stdDeviation="0.5"/></filter></defs><rect x="0" y="0" width="18" height="18" fill="url(#cg)"/><g fill="#fff" filter="url(#cb)" opacity="0.95"><circle cx="11" cy="7.4" r="2.2"/><circle cx="8.6" cy="10" r="2.8"/><circle cx="12.6" cy="10.6" r="2.8"/><circle cx="5.4" cy="13" r="3"/><circle cx="10" cy="13.6" r="3.4"/><circle cx="14.6" cy="13.6" r="2.8"/><rect x="2.6" y="14" width="15" height="4"/></g></svg>
<div style="left:962.30px;top:651.30px;width:19.10px;height:19.10px;background:#121216;border-radius:1px;"></div>
<div style="left:963.00px;top:652.00px;width:17.70px;height:17.70px;background:#0a66ff;"></div>
<svg style="left:963.00px;top:652.00px;" width="17.70" height="17.70" viewBox="0 0 18 18"><path d="M1.6 4.6C4.6 3 9 2.6 11.6 3.4V10C9 9.4 4.6 9.8 1.6 11.2z" fill="none" stroke="#c8b8a0" stroke-width="0.9"/><path d="M6.4 8.6C9.4 9.8 13.6 9.4 16.4 8V14.6C13.6 16 9.4 16.2 6.4 15z" fill="#1060f0" stroke="#c8b8a0" stroke-width="0.9"/><path d="M6.6 8.6L8.4 6.6L11.4 7.2V9.4C9.6 9.6 8 9.2 6.6 8.6z" fill="#b0b0b0"/></svg>
<svg style="left:991.10px;top:652.00px;" width="17.70" height="17.70" viewBox="0 0 18 18"><rect x="0.6" y="0.6" width="1" height="1" fill="#c8c8c8"/><rect x="0.6" y="3.2" width="1" height="1" fill="#c8c8c8"/><rect x="0.6" y="5.8" width="1" height="1" fill="#c8c8c8"/><rect x="0.6" y="8.4" width="1" height="1" fill="#c8c8c8"/><rect x="2.6" y="1.8" width="1" height="1" fill="#c8c8c8"/><rect x="2.6" y="4.4" width="1" height="1" fill="#c8c8c8"/><rect x="2.6" y="7" width="1" height="1" fill="#c8c8c8"/><rect x="4.6" y="3" width="1" height="1" fill="#c8c8c8"/><rect x="4.6" y="5.6" width="1" height="1" fill="#c8c8c8"/><rect x="6.4" y="4.4" width="1" height="1" fill="#c8c8c8"/><rect x="9.6" y="2.6" width="2.4" height="3.4" rx="0.8" fill="#c8c8c8"/><path d="M5.6 16.4V11.6C5.6 8.6 8 7 10.8 7C13.6 7 16.6 8.6 16.6 11.6V16.4z" fill="#c8c8c8"/><rect x="6.8" y="11.6" width="8.6" height="3" rx="0.4" fill="#222"/></svg>
<svg style="left:934.90px;top:679.40px;" width="17.70" height="17.70" viewBox="0 0 18 18"><path d="M7.4 5.6L1.6 2.4C1 5 1.2 7.6 2 10L7.4 7.6zM10.6 5.6L16.4 2.4C17 5 16.8 7.6 16 10L10.6 7.6z" fill="#c8c8c8"/><rect x="7.8" y="4.2" width="2.4" height="4.4" rx="0.6" fill="#c8c8c8"/><path d="M7.6 9C6 10.6 3.6 13 2 16.4L5.2 16.8C5.6 13.6 7 11 8.4 9.6zM10.4 9C12 10.6 14.4 13 16 16.4L12.8 16.8C12.4 13.6 11 11 9.6 9.6z" fill="#c8c8c8"/><path d="M3 5L5.6 6.4L3.2 7.6zM15 5L12.4 6.4L14.8 7.6z" fill="#222" opacity="0.55"/></svg>
<div style="left:962.30px;top:678.70px;width:19.10px;height:19.10px;background:#121216;border-radius:1px;"></div>
<div style="left:963.00px;top:679.40px;width:17.70px;height:17.70px;background:#0000ee;"></div>
<svg style="left:963.00px;top:679.40px;" width="17.70" height="17.70" viewBox="0 0 18 18"><rect width="18" height="18" fill="#0000ee"/><path d="M5.6 5.2C7.4 3.6 9 5.6 10.6 4.6C12.4 3.4 13.2 1 15 1.2L14 3.6L16.6 4.4C15.4 6.2 13.4 6.4 12.8 8.2C14.6 9.4 15 11 13.6 12.6C12.2 14 10.6 13 9.4 14.4C8.6 15.6 9 17 7.6 17.4C6 15.8 4.6 15 4 12.8C3.4 10.4 3.6 7 5.6 5.2z" fill="#000"/><path d="M1 1.6L3.4 1L4.6 3.4L2 4.4zM14.6 13.8L17.6 13L17 16.4L15 17zM1 12L2.6 14.6L1 16zM16 7.4L17.6 8.6L16.8 10.2z" fill="#000"/></svg>
<div style="left:990.40px;top:678.70px;width:19.10px;height:19.10px;background:#121216;border-radius:1px;"></div>
<div style="left:991.10px;top:679.40px;width:17.70px;height:17.70px;background:#0a88cc;"></div>
<svg style="left:991.10px;top:679.40px;" width="17.70" height="17.70" viewBox="0 0 18 18"><path d="M1.6 16.4C2.6 11 6 6 10.4 3.6L14.4 7.6C12 12 7 15.4 1.6 16.4z" fill="none" stroke="#4a5560" stroke-width="1.1" stroke-linejoin="round"/><path d="M2 16L8 10" stroke="#4a5560" stroke-width="0.9"/><circle cx="8.4" cy="9.6" r="0.9" fill="#4a5560"/><path d="M10.6 3.2L13.2 0.8L17.2 4.8L14.8 7.4z" fill="#4a5560"/></svg>
<svg style="left:934.90px;top:706.80px;" width="17.70" height="17.70" viewBox="0 0 18 18"><path d="M9 2.6L15.4 9L9 15.4L2.6 9z" fill="#c8c8c8"/><path d="M2 2L16 16M16 2L2 16" stroke="#c8c8c8" stroke-width="0.9"/><path d="M9 6.8L11.2 9L9 11.2L6.8 9z" fill="#222"/><path d="M2 2L16 16M16 2L2 16" stroke="#222" stroke-width="0.5" opacity="0.0"/></svg>
<div style="left:962.30px;top:706.10px;width:19.10px;height:19.10px;background:#121216;border-radius:1px;"></div>
<div style="left:963.00px;top:706.80px;width:17.70px;height:17.70px;background:#ff70f0;"></div>
<svg style="left:963.00px;top:706.80px;" width="17.70" height="17.70" viewBox="0 0 18 18"><path d="M7.4 5.6L1.6 2.4C1 5 1.2 7.6 2 10L7.4 7.6zM10.6 5.6L16.4 2.4C17 5 16.8 7.6 16 10L10.6 7.6z" fill="#454545"/><rect x="7.8" y="4.2" width="2.4" height="4.4" rx="0.6" fill="#454545"/><path d="M7.6 9C6 10.6 3.6 13 2 16.4L5.2 16.8C5.6 13.6 7 11 8.4 9.6zM10.4 9C12 10.6 14.4 13 16 16.4L12.8 16.8C12.4 13.6 11 11 9.6 9.6z" fill="#454545"/><path d="M3 5L5.6 6.4L3.2 7.6zM15 5L12.4 6.4L14.8 7.6z" fill="#ff70f0" opacity="0.55"/></svg>
<div style="left:929.40px;top:730.80px;width:26.60px;height:25.00px;background:#2a2a2a;border:1px solid #444;border-radius:3px;"></div>
<div style="left:931.80px;top:733.20px;width:21.80px;height:20.20px;background:#000;"></div>
<div style="left:958.60px;top:731.00px;width:27.60px;height:24.20px;background:#3a1a5c;border:1.9px solid #8e9fd0;border-radius:3.2px;"></div>
<div style="left:988.90px;top:730.80px;width:27.00px;height:25.00px;background:#2a2a2a;border:1px solid #444;border-radius:3px;"></div>
<svg style="left:991.40px;top:733.00px;border-radius:3px;overflow:hidden;" width="22.20" height="20.20" viewBox="0 0 22.2 22.2"><rect x="0.00" y="0.00" width="4.49" height="4.49" fill="#fff"/><rect x="4.44" y="0.00" width="4.49" height="4.49" fill="#7a7a7a"/><rect x="8.88" y="0.00" width="4.49" height="4.49" fill="#fff"/><rect x="13.32" y="0.00" width="4.49" height="4.49" fill="#7a7a7a"/><rect x="17.76" y="0.00" width="4.49" height="4.49" fill="#fff"/><rect x="0.00" y="4.44" width="4.49" height="4.49" fill="#7a7a7a"/><rect x="4.44" y="4.44" width="4.49" height="4.49" fill="#fff"/><rect x="8.88" y="4.44" width="4.49" height="4.49" fill="#7a7a7a"/><rect x="13.32" y="4.44" width="4.49" height="4.49" fill="#fff"/><rect x="17.76" y="4.44" width="4.49" height="4.49" fill="#7a7a7a"/><rect x="0.00" y="8.88" width="4.49" height="4.49" fill="#fff"/><rect x="4.44" y="8.88" width="4.49" height="4.49" fill="#7a7a7a"/><rect x="8.88" y="8.88" width="4.49" height="4.49" fill="#fff"/><rect x="13.32" y="8.88" width="4.49" height="4.49" fill="#7a7a7a"/><rect x="17.76" y="8.88" width="4.49" height="4.49" fill="#fff"/><rect x="0.00" y="13.32" width="4.49" height="4.49" fill="#7a7a7a"/><rect x="4.44" y="13.32" width="4.49" height="4.49" fill="#fff"/><rect x="8.88" y="13.32" width="4.49" height="4.49" fill="#7a7a7a"/><rect x="13.32" y="13.32" width="4.49" height="4.49" fill="#fff"/><rect x="17.76" y="13.32" width="4.49" height="4.49" fill="#7a7a7a"/><rect x="0.00" y="17.76" width="4.49" height="4.49" fill="#fff"/><rect x="4.44" y="17.76" width="4.49" height="4.49" fill="#7a7a7a"/><rect x="8.88" y="17.76" width="4.49" height="4.49" fill="#fff"/><rect x="13.32" y="17.76" width="4.49" height="4.49" fill="#7a7a7a"/><rect x="17.76" y="17.76" width="4.49" height="4.49" fill="#fff"/></svg>
<div style="left:1016.30px;top:60.00px;width:0.80px;height:749.00px;background:#1c1c1c;"></div>
<svg style="left:1023.00px;top:63.00px;" width="7.00" height="7.00" viewBox="0 0 7 7"><path d="M0 0.6h6.6M0 3.3h6.6M0 6h6.6" stroke="#5c5c5c" stroke-width="0.9"/></svg>
<div style="left:1035.60px;top:62.00px;width:90.60px;height:14.00px;background:#333;border-radius:1px 1px 0 0;"></div>
<div style="left:1017.20px;top:75.00px;width:140.00px;height:4.40px;background:#333;"></div>
<svg style="left:0.00px;top:0.00px;" width="1440.00" height="809.00" viewBox="0 0 1440 809"><path d="M1043.5 73.6L1052.2 65.4" stroke="#cfcfcf" stroke-width="2.4" stroke-linecap="butt"/><path d="M1041.6 75.4L1044.3 74.5L1042.7 72.7z" fill="#cfcfcf"/><rect x="1046.8" y="70.6" width="7.6" height="6" fill="#333" stroke="#cfcfcf" stroke-width="0.9"/><path d="M1046.8 73.6h7.6M1049.4 70.6v6" stroke="#cfcfcf" stroke-width="0.8"/></svg>
<span class="t" style="top:64.72px;font-size:8.4px;line-height:11.76px;color:#cfcfcf;left:1059.60px;transform-origin:0 50%;transform:scaleX(0.668);">サブツール[塗り筆ペン 2]</span>
<div style="left:1017.20px;top:79.40px;width:140.00px;height:22.40px;background:#2d2d2d;"></div>
<div style="left:1018.00px;top:80.30px;width:125.20px;height:20.40px;background:#4a566f;border-radius:2px;"></div>
<div style="left:1020.00px;top:82.00px;width:17.30px;height:17.60px;background:#ffd200;"></div>
<svg style="left:1020.00px;top:82.00px;" width="17.40" height="17.40" viewBox="0 0 18 18"><path d="M1.6 16.4C2.6 11 6 6 10.4 3.6L14.4 7.6C12 12 7 15.4 1.6 16.4z" fill="none" stroke="#444" stroke-width="1.1" stroke-linejoin="round"/><path d="M2 16L8 10" stroke="#444" stroke-width="0.9"/><circle cx="8.4" cy="9.6" r="0.9" fill="#444"/><path d="M10.6 3.2L13.2 0.8L17.2 4.8L14.8 7.4z" fill="#444"/></svg>
<span class="t" style="top:85.45px;font-size:8.5px;line-height:11.90px;color:#dedede;left:1039.80px;transform-origin:0 50%;transform:scaleX(0.756);">塗りGペン</span>
<div style="left:1017.20px;top:101.80px;width:132.40px;height:225.00px;background:#222;"></div>
<div style="left:1149.60px;top:101.80px;width:7.60px;height:225.00px;background:#2a2a2a;"></div>
<div style="left:1017.40px;top:103.00px;width:131.80px;height:29.50px;background:#434f68;"></div>
<div style="left:1017.40px;top:132.60px;width:131.80px;height:1.00px;background:#1a1a1a;"></div>
<div style="left:1017.40px;top:162.80px;width:131.80px;height:1.00px;background:#1a1a1a;"></div>
<div style="left:1017.40px;top:193.00px;width:131.80px;height:1.00px;background:#1a1a1a;"></div>
<svg style="left:1017.40px;top:103.00px;" width="132.00" height="30.00" viewBox="0 0 132 30"><path d="M12 13.7C20 8.5 28 5.4 36 5L54.4 5C58 5.2 60 10 64.5 12C72 14 84 12 95.8 5.4C86 12.6 80 14 74.2 14.3L53.2 14.3C49 13 46.5 8 43.3 6.9C40 6 29 5.9 12 13.7z" fill="#fff"/></svg>
<svg style="left:1017.40px;top:134.00px;" width="132.00" height="30.00" viewBox="0 0 132 30"><path d="M11.3 13.6C20 7.4 29 3 37.1 2.5C42 2.2 46 2.4 49.4 3.1C56 4.6 59 8.6 64.3 9.9C68 11 71 11.2 74.2 11.1C82 10.8 90 8 96.4 4.3C89 10.6 82 14.4 74.2 14.8C71 15.2 67 15.4 64.3 15.2C60 14.8 57 14.4 54.4 13.6C50 12 48 9.8 45.7 8.6C43 7 40 6.2 37.1 6.2C32 6.2 28 7.2 24.7 8.6C20 10.4 15.6 12 11.3 13.6z" fill="#fff"/></svg>
<svg style="left:1017.40px;top:164.40px;" width="132.00" height="30.00" viewBox="0 0 132 30"><path d="M11.1 14.1C20 8.6 29 5.2 37.1 4.8C41 4.6 44 5.2 47 6.1" fill="none" stroke="#9a9a9a" stroke-width="0.7"/><path d="M62 11C66 12.6 70 13.3 74.2 13.2C82 13 90 9.4 97 4.2" fill="none" stroke="#9a9a9a" stroke-width="0.7"/><path d="M46.6 5.8L49.4 6.4L54.6 6.4C57 7.4 59 9.8 62 10.7L64.4 11.7L53 11.4C51.4 10 50.4 8.6 48.8 7.6z" fill="#fff"/></svg>
<div style="left:1114.00px;top:122.30px;width:34.40px;height:9.40px;background:#303a4f;"></div>
<span class="t" style="top:122.45px;font-size:8.5px;line-height:11.90px;color:#dedede;right:293.00px;transform-origin:100% 50%;transform:scaleX(0.756);">塗りGペン</span>
<span class="t" style="top:152.65px;font-size:8.5px;line-height:11.90px;color:#d6d6d6;right:293.00px;transform-origin:100% 50%;transform:scaleX(0.804);">塗りGペン 3</span>
<span class="t" style="top:183.05px;font-size:8.5px;line-height:11.90px;color:#d6d6d6;right:293.00px;transform-origin:100% 50%;transform:scaleX(0.804);">塗りGペン 4</span>
<svg style="left:1043.60px;top:212.20px;" width="10.40" height="10.40" viewBox="0 0 10.4 10.4"><circle cx="5.2" cy="5.2" r="4.9" fill="#d8d8d8"/><path d="M5.2 2.4v5.6M2.4 5.2h5.6" stroke="#222" stroke-width="1.3"/></svg>
<span class="t" style="top:212.25px;font-size:8.5px;line-height:11.90px;color:#cfcfcf;left:1058.00px;transform-origin:0 50%;transform:scaleX(0.824);">サブツールを追加する</span>
<div style="left:1017.20px;top:326.60px;width:140.00px;height:20.00px;background:#323232;"></div>
<svg style="left:0.00px;top:0.00px;" width="1440.00" height="809.00" viewBox="0 0 1440 809"><path d="M1095 332H1093C1092 332 1091.6 332.4 1091.6 333.4V340.8C1091.6 341.8 1092 342.2 1093 342.2H1101C1102 342.2 1102.4 341.8 1102.4 340.8V333.4C1102.4 332.4 1102 332 1101 332H1099" fill="none" stroke="#d8d8d8" stroke-width="1"/><path d="M1097 331V337.4" stroke="#d8d8d8" stroke-width="1.1"/><path d="M1094.4 335.8L1097 338.8L1099.6 335.8z" fill="#d8d8d8"/><path d="M1092 339.6h10" stroke="#d8d8d8" stroke-width="0.8"/><rect x="1115.4" y="330.6" width="8.4" height="8.4" rx="1.8" fill="none" stroke="#d8d8d8" stroke-width="1"/><rect x="1118.4" y="333.6" width="8.6" height="8.6" rx="1.8" fill="#333" stroke="#d8d8d8" stroke-width="1"/><path d="M1122.7 335.4v5M1120.2 337.9h5" stroke="#d8d8d8" stroke-width="1.2"/><path d="M1140.2 332.2h9.4" stroke="#d8d8d8" stroke-width="1.2"/><path d="M1143.02 332V330.5H1146.78V332" fill="none" stroke="#d8d8d8" stroke-width="0.9"/><path d="M1141.0 333.4H1148.8000000000002V341.0C1148.8000000000002 342.0 1148.2 342.4 1147.4 342.4H1142.4C1141.6000000000001 342.4 1141.0 342.0 1141.0 341.0z" fill="none" stroke="#d8d8d8" stroke-width="1"/><path d="M1143.02 334.6V340.79999999999995" stroke="#d8d8d8" stroke-width="0.8"/><path d="M1144.90 334.6V340.79999999999995" stroke="#d8d8d8" stroke-width="0.8"/><path d="M1146.78 334.6V340.79999999999995" stroke="#d8d8d8" stroke-width="0.8"/></svg>
<svg style="left:1023.00px;top:353.50px;" width="7.00" height="7.00" viewBox="0 0 7 7"><path d="M0 0.6h6.6M0 3.3h6.6M0 6h6.6" stroke="#5c5c5c" stroke-width="0.9"/></svg>
<div style="left:1035.70px;top:353.50px;width:95.00px;height:12.50px;background:#333;"></div>
<div style="left:1132.50px;top:353.50px;width:24.00px;height:12.50px;background:#333;"></div>
<div style="left:1017.20px;top:365.40px;width:140.00px;height:3.80px;background:#333;"></div>
<svg style="left:0.00px;top:0.00px;" width="1440.00" height="809.00" viewBox="0 0 1440 809"><path d="M1044.2 364.7L1053.4 355.5" stroke="#cfcfcf" stroke-width="2.4" stroke-linecap="butt"/><path d="M1042.4 366.5L1045.1 365.5L1043.4 363.8z" fill="#cfcfcf"/><path d="M1052.70 364.90L1054.80 364.90" stroke="#cfcfcf" stroke-width="1.5"/><path d="M1052.20 366.10L1053.69 367.59" stroke="#cfcfcf" stroke-width="1.5"/><path d="M1051.00 366.60L1051.00 368.70" stroke="#cfcfcf" stroke-width="1.5"/><path d="M1049.80 366.10L1048.31 367.59" stroke="#cfcfcf" stroke-width="1.5"/><path d="M1049.30 364.90L1047.20 364.90" stroke="#cfcfcf" stroke-width="1.5"/><path d="M1049.80 363.70L1048.31 362.21" stroke="#cfcfcf" stroke-width="1.5"/><path d="M1051.00 363.20L1051.00 361.10" stroke="#cfcfcf" stroke-width="1.5"/><path d="M1052.20 363.70L1053.69 362.21" stroke="#cfcfcf" stroke-width="1.5"/><circle cx="1051" cy="364.9" r="2.3" fill="#cfcfcf"/><circle cx="1051" cy="364.9" r="1.15" fill="#333"/></svg>
<span class="t" style="top:354.72px;font-size:8.4px;line-height:11.76px;color:#cfcfcf;left:1060.50px;transform-origin:0 50%;transform:scaleX(0.615);-webkit-mask-image:linear-gradient(90deg,#000 72%,rgba(0,0,0,0.15) 100%);mask-image:linear-gradient(90deg,#000 72%,rgba(0,0,0,0.15) 100%);">ツールプロパティ[塗りGペン</span>
<svg style="left:0.00px;top:0.00px;" width="1440.00" height="809.00" viewBox="0 0 1440 809"><path d="M1142.0 362.7L1149.8 355.8" stroke="#686868" stroke-width="2.2" stroke-linecap="butt"/><path d="M1145.6 364.6C1146.4 362.4 1149.4 362.4 1150.4 364.6" fill="none" stroke="#555" stroke-width="0.8"/></svg>
<div style="left:1017.20px;top:369.20px;width:140.00px;height:35.00px;background:#333;"></div>
<div style="left:1017.60px;top:370.30px;width:69.20px;height:33.00px;background:#b4b4b4;"></div>
<div style="left:1018.00px;top:370.80px;width:33.50px;height:8.80px;background:#8f8f8f;"></div>
<span class="t" style="top:370.15px;font-size:8.5px;line-height:11.90px;color:#d8d8d8;left:1018.60px;transform-origin:0 50%;transform:scaleX(0.768);">塗りGペン</span>
<svg style="left:1017.60px;top:370.30px;" width="140.00" height="33.00" viewBox="0 0 140 33"><path d="M14 23.8C24 15.6 36 9 50 8.4C60 8 68 8.4 72.6 9.4C79 12 78.6 17.6 85.6 20.2C95 23 110 18.6 121.6 11.2C110 20 95 24.6 83 24.4C73 24.4 67 24.4 64 21.8C60 17.8 57 12.2 49 11C38 10.2 26 14.8 14 23.8z" fill="#3a1a5c"/></svg>
<svg style="left:0.00px;top:0.00px;" width="1440.00" height="809.00" viewBox="0 0 1440 809"><rect x="1141.8000000000002" y="391.6" width="6.4" height="5" rx="0.6" fill="#dcdcdc"/><path d="M1142.8000000000002 393.2h4.4" stroke="#333" stroke-width="0.7"/><path d="M1138.6000000000001 390.6V389.4C1138.6000000000001 386.6 1142.8000000000002 386.6 1142.8000000000002 389.4V391.6" fill="none" stroke="#dcdcdc" stroke-width="1"/></svg>
<div style="left:1149.60px;top:404.40px;width:7.60px;height:383.60px;background:#292929;"></div>
<div style="left:1019.60px;top:410.30px;width:2.20px;height:0.70px;background:#4a4a4a;"></div>
<span class="t" style="top:405.45px;font-size:8.5px;line-height:11.90px;color:#d4d4d4;left:1023.30px;transform-origin:0 50%;transform:scaleX(0.745);">ブラシサイズ</span>
<div style="left:1062.50px;top:410.30px;width:84.50px;height:0.70px;background:#4a4a4a;"></div>
<svg style="left:1020.20px;top:417.80px;" width="9.40" height="9.40" viewBox="0 0 9.4 9.4"><rect x="0.4" y="0.4" width="8.6" height="8.6" rx="1.2" fill="#484848" stroke="#5a5a5a" stroke-width="0.6"/><path d="M4.7 0.8v7.8M0.8 4.7h7.8" stroke="#c4c4c4" stroke-width="1"/></svg>
<div style="left:1049.30px;top:422.20px;width:41.20px;height:7.60px;border-bottom:0.8px solid #555;"></div>
<div style="left:1049.30px;top:422.20px;width:27.30px;height:7.40px;background:#444;border:0.7px solid #555;"></div>
<span class="t" style="top:416.65px;font-size:8.5px;line-height:11.90px;color:#d4d4d4;right:317.20px;transform-origin:100% 50%;transform:scaleX(0.906);">74.5</span>
<svg style="left:1124.10px;top:416.50px;" width="7.80" height="12.40" viewBox="0 0 7.8 12.4"><path d="M0.6 4.9L3.9 1.3L7.2 4.9M0.6 7.5L3.9 11.1L7.2 7.5" stroke="#cfcfcf" stroke-width="1.1" fill="none"/></svg>
<div style="left:1135.00px;top:415.30px;width:12.80px;height:14.40px;background:#3c3c3c;border:0.7px solid #555;border-radius:1.5px;"></div>
<svg style="left:1137.20px;top:417.80px;" width="8.40" height="9.60" viewBox="0 0 8.4 9.6"><path d="M0.8 1.4L4.2 4.6L7.6 1.4M0.8 5.2L4.2 8.4L7.6 5.2" stroke="#ddd" stroke-width="1.1" fill="none"/></svg>
<div style="left:1019.60px;top:441.20px;width:2.20px;height:0.70px;background:#4a4a4a;"></div>
<span class="t" style="top:436.35px;font-size:8.5px;line-height:11.90px;color:#d4d4d4;left:1023.30px;transform-origin:0 50%;transform:scaleX(0.692);">インク</span>
<div style="left:1042.50px;top:441.20px;width:104.50px;height:0.70px;background:#4a4a4a;"></div>
<span class="t" style="top:451.25px;font-size:8.5px;line-height:11.90px;color:#d4d4d4;left:1031.70px;transform-origin:0 50%;transform:scaleX(0.941);">不透明度</span>
<div style="left:1049.30px;top:463.00px;width:41.20px;height:7.20px;background:#444;border:0.7px solid #555;"></div>
<span class="t" style="top:454.85px;font-size:8.5px;line-height:11.90px;color:#d4d4d4;right:316.80px;transform-origin:100% 50%;transform:scaleX(1.014);">100</span>
<svg style="left:1124.10px;top:456.00px;" width="7.80" height="12.40" viewBox="0 0 7.8 12.4"><path d="M0.6 4.9L3.9 1.3L7.2 4.9M0.6 7.5L3.9 11.1L7.2 7.5" stroke="#cfcfcf" stroke-width="1.1" fill="none"/></svg>
<div style="left:1135.00px;top:451.00px;width:12.80px;height:19.80px;background:#3c3c3c;border:0.7px solid #555;border-radius:1.5px;"></div>
<svg style="left:1137.70px;top:457.20px;" width="7.40" height="7.40" viewBox="0 0 7.4 7.4"><rect x="0.6" y="0.6" width="6.2" height="6.2" rx="1.4" fill="none" stroke="#ddd" stroke-width="1"/><path d="M1.4 6L6 1.4" stroke="#ddd" stroke-width="1"/></svg>
<div style="left:1019.60px;top:478.70px;width:2.20px;height:0.70px;background:#4a4a4a;"></div>
<span class="t" style="top:473.85px;font-size:8.5px;line-height:11.90px;color:#d4d4d4;left:1023.30px;transform-origin:0 50%;transform:scaleX(0.713);">アンチエイリアス</span>
<div style="left:1073.00px;top:478.70px;width:74.00px;height:0.70px;background:#4a4a4a;"></div>
<div style="left:1066.60px;top:484.50px;width:81.30px;height:19.40px;background:#3a3a3a;border:0.7px solid #555;border-radius:1.5px;"></div>
<div style="left:1084.40px;top:485.00px;width:17.40px;height:18.40px;background:#6b80b5;"></div>
<svg style="left:0.00px;top:0.00px;" width="1440.00" height="809.00" viewBox="0 0 1440 809"><defs><radialGradient id="aa3"><stop offset="0.7" stop-color="#c8c8c8"/><stop offset="1" stop-color="#c8c8c8" stop-opacity="0"/></radialGradient><radialGradient id="aa4"><stop offset="0.42" stop-color="#c4c4c4"/><stop offset="1" stop-color="#888" stop-opacity="0"/></radialGradient></defs><path d="M1073 488.2h4v1.2h1.8v1.2h1.2v1.4h1v4h-1v1.4h-1.2v1.2H1077v1.2h-4v-1.2h-1.8v-1.2H1070v-1.4h-1v-4h1v-1.4h1.2v-1.2h1.8z" fill="#d8d8d8"/><circle cx="1092.5" cy="494" r="5.9" fill="#cfcdc6"/><circle cx="1110" cy="494" r="6.8" fill="url(#aa3)"/><circle cx="1127.2" cy="494" r="7.2" fill="url(#aa4)"/><path d="M1138.2 492.2L1141.8 496L1145.4 492.2" fill="none" stroke="#ddd" stroke-width="1.1"/></svg>
<div style="left:1019.60px;top:515.40px;width:2.20px;height:0.70px;background:#4a4a4a;"></div>
<span class="t" style="top:510.55px;font-size:8.5px;line-height:11.90px;color:#d4d4d4;left:1023.30px;transform-origin:0 50%;transform:scaleX(0.721);">ストローク</span>
<div style="left:1055.50px;top:515.40px;width:91.50px;height:0.70px;background:#4a4a4a;"></div>
<span class="t" style="top:529.55px;font-size:8.5px;line-height:11.90px;color:#d4d4d4;left:1031.20px;transform-origin:0 50%;">間隔</span>
<div style="left:1071.50px;top:525.60px;width:76.40px;height:19.50px;background:#3a3a3a;border:0.7px solid #555;border-radius:1.5px;"></div>
<div style="left:1071.80px;top:526.00px;width:17.20px;height:18.70px;background:#6b80b5;"></div>
<svg style="left:0.00px;top:0.00px;" width="1440.00" height="809.00" viewBox="0 0 1440 809"><circle cx="1080.2" cy="535" r="2.1" fill="none" stroke="#cfd4e6" stroke-width="1.4"/><circle cx="1093" cy="535" r="2.1" fill="none" stroke="#c8c8c8" stroke-width="1.4"/><circle cx="1100" cy="535" r="2.1" fill="none" stroke="#c8c8c8" stroke-width="1.4"/><circle cx="1112.2" cy="535" r="2.1" fill="none" stroke="#c8c8c8" stroke-width="1.4"/><path d="M1105.2 532.4C1107 534 1107 536 1105.2 537.6M1118.8 532.4C1117 534 1117 536 1118.8 537.6" fill="none" stroke="#c8c8c8" stroke-width="1.4"/><circle cx="1123.6" cy="535" r="2.1" fill="none" stroke="#c8c8c8" stroke-width="1.4"/><circle cx="1127.8" cy="535" r="2.1" fill="none" stroke="#c8c8c8" stroke-width="1.4"/><circle cx="1132" cy="535" r="2.1" fill="none" stroke="#c8c8c8" stroke-width="1.4"/><path d="M1138.2 533.2L1141.8 537L1145.4 533.2" fill="none" stroke="#ddd" stroke-width="1.1"/></svg>
<div style="left:1023.30px;top:548.70px;width:124.00px;height:0.70px;background:#4a4a4a;"></div>
<div style="left:1031.20px;top:556.40px;width:11.60px;height:11.80px;background:#3c3c3c;border:0.7px solid #5a5a5a;border-radius:1.5px;"></div>
<svg style="left:1031.20px;top:556.40px;" width="11.60" height="11.80" viewBox="0 0 11.6 11.8"><path d="M2.3 6.2L4.7 9.2L9.4 2.6" stroke="#f4f4f4" stroke-width="1.55" fill="none"/></svg>
<span class="t" style="top:557.55px;font-size:8.5px;line-height:11.90px;color:#d4d4d4;left:1045.60px;transform-origin:0 50%;transform:scaleX(0.951);">速度値の環境補正</span>
<div style="left:1019.60px;top:583.90px;width:2.20px;height:0.70px;background:#4a4a4a;"></div>
<span class="t" style="top:579.05px;font-size:8.5px;line-height:11.90px;color:#d4d4d4;left:1023.30px;transform-origin:0 50%;transform:scaleX(0.912);">補正</span>
<div style="left:1040.00px;top:583.90px;width:107.00px;height:0.70px;background:#4a4a4a;"></div>
<span class="t" style="top:594.05px;font-size:8.5px;line-height:11.90px;color:#d4d4d4;left:1031.70px;transform-origin:0 50%;transform:scaleX(0.860);">手ブレ補正</span>
<div style="left:1049.30px;top:605.50px;width:41.20px;height:7.20px;border-bottom:0.8px solid #555;"></div>
<div style="left:1049.30px;top:605.50px;width:27.80px;height:7.00px;background:#444;border:0.7px solid #555;"></div>
<span class="t" style="top:598.05px;font-size:8.5px;line-height:11.90px;color:#d4d4d4;right:317.60px;transform-origin:100% 50%;transform:scaleX(1.022);">15</span>
<svg style="left:1124.30px;top:598.30px;" width="7.80" height="12.40" viewBox="0 0 7.8 12.4"><path d="M0.6 4.9L3.9 1.3L7.2 4.9M0.6 7.5L3.9 11.1L7.2 7.5" stroke="#cfcfcf" stroke-width="1.1" fill="none"/></svg>
<div style="left:1023.30px;top:617.00px;width:124.00px;height:0.70px;background:#4a4a4a;"></div>
<div style="left:1031.20px;top:625.60px;width:11.60px;height:11.80px;background:#3c3c3c;border:0.7px solid #5a5a5a;border-radius:1.5px;"></div>
<svg style="left:1031.20px;top:625.60px;" width="11.60" height="11.80" viewBox="0 0 11.6 11.8"><path d="M2.3 6.2L4.7 9.2L9.4 2.6" stroke="#f4f4f4" stroke-width="1.55" fill="none"/></svg>
<span class="t" style="top:626.25px;font-size:8.5px;line-height:11.90px;color:#d4d4d4;left:1044.60px;transform-origin:0 50%;transform:scaleX(0.814);">スナップ可能</span>
<div style="left:1023.30px;top:645.30px;width:124.00px;height:0.70px;background:#4a4a4a;"></div>
<div style="left:1031.20px;top:652.80px;width:11.60px;height:11.80px;background:#292929;border:0.7px solid #2d2d2d;border-radius:1.5px;"></div>
<span class="t" style="top:653.65px;font-size:8.5px;line-height:11.90px;color:#606060;left:1044.60px;transform-origin:0 50%;transform:scaleX(0.706);">ベクター吸着</span>
<div style="left:1082.70px;top:649.00px;width:65.00px;height:20.00px;background:#282828;"></div>
<div style="left:1092.50px;top:649.00px;width:0.80px;height:20.00px;background:#222;"></div>
<div style="left:1102.50px;top:649.00px;width:0.80px;height:20.00px;background:#222;"></div>
<div style="left:1112.50px;top:649.00px;width:0.80px;height:20.00px;background:#222;"></div>
<div style="left:1122.50px;top:649.00px;width:0.80px;height:20.00px;background:#222;"></div>
<div style="left:1134.00px;top:649.00px;width:0.80px;height:20.00px;background:#222;"></div>
<svg style="left:1138.60px;top:654.20px;" width="5.60" height="9.60" viewBox="0 0 5.6 9.6"><path d="M0.8 0.8L4.8 4.8L0.8 8.8" stroke="#585858" stroke-width="1" fill="none"/></svg>
<div style="left:1019.60px;top:680.10px;width:2.20px;height:0.70px;background:#4a4a4a;"></div>
<span class="t" style="top:675.25px;font-size:8.5px;line-height:11.90px;color:#d4d4d4;left:1021.80px;transform-origin:0 50%;transform:scaleX(0.902);">はみ出し防止</span>
<div style="left:1069.00px;top:680.10px;width:78.00px;height:0.70px;background:#4a4a4a;"></div>
<div style="left:1031.20px;top:693.80px;width:11.60px;height:11.80px;background:#3c3c3c;border:0.7px solid #5a5a5a;border-radius:1.5px;"></div>
<span class="t" style="top:695.05px;font-size:8.5px;line-height:11.90px;color:#d4d4d4;left:1045.30px;transform-origin:0 50%;transform:scaleX(0.753);">参照レイヤーの線からはみ出さない</span>
<div style="left:1023.30px;top:713.20px;width:124.00px;height:0.70px;background:#4a4a4a;"></div>
<span class="t" style="top:717.15px;font-size:8.5px;line-height:11.90px;color:#646464;left:1031.70px;transform-origin:0 50%;transform:scaleX(0.912);">色の誤差</span>
<div style="left:1049.30px;top:729.40px;width:41.30px;height:7.00px;border:0.7px solid #4c4c4c;"></div>
<div style="left:1023.30px;top:740.90px;width:124.00px;height:0.70px;background:#4a4a4a;"></div>
<div style="left:1031.20px;top:745.30px;width:11.60px;height:11.80px;background:#292929;border:0.7px solid #2d2d2d;border-radius:1.5px;"></div>
<span class="t" style="top:745.85px;font-size:8.5px;line-height:11.90px;color:#646464;left:1045.90px;transform-origin:0 50%;transform:scaleX(0.941);">領域拡縮</span>
<div style="left:1049.30px;top:758.80px;width:41.30px;height:7.00px;border:0.7px solid #4c4c4c;"></div>
<div style="left:1017.20px;top:787.80px;width:139.40px;height:19.80px;background:#323232;"></div>
<svg style="left:0.00px;top:0.00px;" width="1440.00" height="809.00" viewBox="0 0 1440 809"><path d="M1118.6 792.4A5.8 5.8 0 1 0 1121.2 791.7" fill="none" stroke="#d0d0d0" stroke-width="1.1"/><path d="M1121.2 791.4V797.4" stroke="#d0d0d0" stroke-width="1.1"/><circle cx="1121.2" cy="797.6" r="1.6" fill="#d0d0d0"/><path d="M1144.6 797.2L1149.2 801.8" stroke="#d0d0d0" stroke-width="3.6" stroke-linecap="round"/><path d="M1144.6 797.2L1149.2 801.8" stroke="#323232" stroke-width="1.4" stroke-linecap="round"/><circle cx="1142.9" cy="795.4" r="3" fill="#323232" stroke="#d0d0d0" stroke-width="1.2"/><path d="M1142.9 795.4L1139.6 792.2" stroke="#323232" stroke-width="2.6"/><path d="M1144.6 797.2L1146 798.6" stroke="#323232" stroke-width="1.4"/></svg>
<div style="left:1156.60px;top:57.40px;width:2.40px;height:752.00px;background:#1c1c1c;"></div>
<div style="left:1157.10px;top:57.40px;width:35.00px;height:90.40px;background:#272727;"></div>
<div style="left:1157.10px;top:57.40px;width:1.90px;height:90.40px;background:#2c2c2c;"></div>
<div style="left:1159.00px;top:62.40px;width:29.00px;height:22.70px;background:#303030;border-radius:0 2px 2px 0;"></div>
<div style="left:1159.00px;top:91.20px;width:29.00px;height:24.60px;background:#303030;border-radius:0 2px 2px 0;"></div>
<div style="left:1159.00px;top:117.20px;width:29.00px;height:25.60px;background:#303030;border-radius:0 2px 2px 0;"></div>
<div style="left:1159.00px;top:116.20px;width:29.00px;height:1.00px;background:#292929;"></div>
<div style="left:1159.10px;top:149.80px;width:33.00px;height:117.20px;background:#313131;border-radius:0 2px 2px 0;"></div>
<svg style="left:0.00px;top:0.00px;" width="1440.00" height="809.00" viewBox="0 0 1440 809"><path d="M1167.7 81.6C1168.4 76.4 1170.7 72.2 1175.4 69.5L1179.5 73.3C1177.7 76.9 1173.0 80.0 1167.7 81.6z" fill="none" stroke="#d4d4d4" stroke-width="1.3" stroke-linejoin="round"/><path d="M1168.1 81.2L1173.7 76.0" stroke="#d4d4d4" stroke-width="1"/><path d="M1175.8 69.1L1178.8 66.4L1183.3 70.4L1180.2 73.1z" fill="#d4d4d4"/><rect x="1177.2" y="74.2" width="7.6" height="8.6" fill="#303030"/><path d="M1177.2 75.2h7.6M1177.2 78.6h7.6M1177.2 82h7.6M1177.4 75v7.2" stroke="#d4d4d4" stroke-width="1.1" fill="none"/><path d="M1167.7 110.2C1168.4 105.0 1170.7 100.8 1175.4 98.1L1179.5 101.9C1177.7 105.5 1173.0 108.6 1167.7 110.2z" fill="none" stroke="#d4d4d4" stroke-width="1.3" stroke-linejoin="round"/><path d="M1168.1 109.8L1173.7 104.6" stroke="#d4d4d4" stroke-width="1"/><path d="M1175.8 97.7L1178.8 95.0L1183.3 99.0L1180.2 101.7z" fill="#d4d4d4"/><circle cx="1180" cy="107" r="5" fill="#303030"/><path d="M1182.20 107.00L1184.30 107.00" stroke="#d4d4d4" stroke-width="1.5"/><path d="M1181.56 108.56L1183.04 110.04" stroke="#d4d4d4" stroke-width="1.5"/><path d="M1180.00 109.20L1180.00 111.30" stroke="#d4d4d4" stroke-width="1.5"/><path d="M1178.44 108.56L1176.96 110.04" stroke="#d4d4d4" stroke-width="1.5"/><path d="M1177.80 107.00L1175.70 107.00" stroke="#d4d4d4" stroke-width="1.5"/><path d="M1178.44 105.44L1176.96 103.96" stroke="#d4d4d4" stroke-width="1.5"/><path d="M1180.00 104.80L1180.00 102.70" stroke="#d4d4d4" stroke-width="1.5"/><path d="M1181.56 105.44L1183.04 103.96" stroke="#d4d4d4" stroke-width="1.5"/><circle cx="1180" cy="107" r="2.8" fill="#d4d4d4"/><circle cx="1180" cy="107" r="1.40" fill="#303030"/><path d="M1167.7 137.6C1168.4 132.4 1170.7 128.2 1175.4 125.5L1179.5 129.3C1177.7 132.9 1173.0 136.0 1167.7 137.6z" fill="none" stroke="#6a6a6a" stroke-width="1.3" stroke-linejoin="round"/><path d="M1168.1 137.2L1173.7 132.0" stroke="#6a6a6a" stroke-width="1"/><path d="M1175.8 125.1L1178.8 122.4L1183.3 126.4L1180.2 129.1z" fill="#6a6a6a"/><circle cx="1180.4" cy="135.4" r="4.6" fill="#303030" stroke="#6a6a6a" stroke-width="0.9"/><circle cx="1180.4" cy="135.4" r="2.4" fill="none" stroke="#6a6a6a" stroke-width="0.9"/><circle cx="1175" cy="165.6" r="7.2" fill="none" stroke="#6a6a6a" stroke-width="1.1"/><rect x="1171" y="161.6" width="8" height="8" rx="1.4" fill="#4a4a4a" stroke="#6a6a6a" stroke-width="0.9"/><path d="M1171.6 187.4C1173 190 1174.8 191.6 1175 193.4C1175.6 191.4 1177 190 1178.4 187.4C1180.4 190.6 1182.6 193 1182.4 195.4C1182.2 198.2 1179.4 199.6 1176.6 198.4C1175.8 198 1175.2 197.6 1175 197.2C1174.6 197.8 1174.2 198.2 1173.4 198.4C1170.6 199.4 1167.8 197.8 1167.8 195.2C1167.8 192.8 1170 190.4 1171.6 187.4z" fill="#6a6a6a"/><rect x="1168.2" y="215.6" width="13.6" height="13.6" rx="1.6" fill="#3a3a3a" stroke="#6a6a6a" stroke-width="0.9"/><rect x="1169.2" y="216.6" width="3.6" height="3.6" fill="#5e5e5e"/><rect x="1173.2" y="216.6" width="3.6" height="3.6" fill="#444"/><rect x="1177.2" y="216.6" width="3.6" height="3.6" fill="#666"/><rect x="1169.2" y="220.6" width="3.6" height="3.6" fill="#444"/><rect x="1173.2" y="220.6" width="3.6" height="3.6" fill="#303030"/><rect x="1177.2" y="220.6" width="3.6" height="3.6" fill="#555"/><rect x="1169.2" y="224.6" width="3.6" height="3.6" fill="#666"/><rect x="1173.2" y="224.6" width="3.6" height="3.6" fill="#4a4a4a"/><rect x="1177.2" y="224.6" width="3.6" height="3.6" fill="#3a3a3a"/><rect x="1168.2" y="244.2" width="13.6" height="13.6" rx="1.4" fill="none" stroke="#6a6a6a" stroke-width="1"/><path d="M1170.8 244.4v13.2M1179.2 244.4v13.2M1170.8 248.4h8.4M1170.8 253.6h8.4" stroke="#6a6a6a" stroke-width="0.9"/><rect x="1171.6" y="249" width="6.8" height="4" fill="#4a4a4a"/><rect x="1168.8" y="245.4" width="1.4" height="1.2" fill="#6a6a6a"/><rect x="1179.8" y="245.4" width="1.4" height="1.2" fill="#6a6a6a"/><rect x="1168.8" y="248.6" width="1.4" height="1.2" fill="#6a6a6a"/><rect x="1179.8" y="248.6" width="1.4" height="1.2" fill="#6a6a6a"/><rect x="1168.8" y="251.8" width="1.4" height="1.2" fill="#6a6a6a"/><rect x="1179.8" y="251.8" width="1.4" height="1.2" fill="#6a6a6a"/><rect x="1168.8" y="255.0" width="1.4" height="1.2" fill="#6a6a6a"/><rect x="1179.8" y="255.0" width="1.4" height="1.2" fill="#6a6a6a"/></svg>
<svg style="left:1200.70px;top:63.20px;" width="7.00" height="7.00" viewBox="0 0 7 7"><path d="M0 0.6h6.6M0 3.3h6.6M0 6h6.6" stroke="#5c5c5c" stroke-width="0.9"/></svg>
<div style="left:1213.00px;top:62.20px;width:73.00px;height:13.50px;background:#333;border-radius:1px 1px 0 0;"></div>
<div style="left:1195.20px;top:74.80px;width:170.80px;height:4.50px;background:#333;"></div>
<svg style="left:0.00px;top:0.00px;" width="1440.00" height="809.00" viewBox="0 0 1440 809"><path d="M1224.8 63.9L1230.6 66.8L1224.8 69.7L1219.0 66.8z" fill="none" stroke="#cfcfcf" stroke-width="1" stroke-linejoin="round"/><path d="M1219.0 69.5L1224.8 72.4L1230.6 69.5" fill="none" stroke="#cfcfcf" stroke-width="1" stroke-linejoin="round"/><path d="M1219.0 72.2L1224.8 75.1L1230.6 72.2" fill="none" stroke="#cfcfcf" stroke-width="1" stroke-linejoin="round"/><rect x="1224.9" y="69.6" width="8" height="8" fill="#333"/><circle cx="1227.1" cy="71.8" r="1.2" fill="none" stroke="#cfcfcf" stroke-width="0.7"/><circle cx="1230.5" cy="71.8" r="1.3" fill="#cfcfcf"/><path d="M1226.1 74.4l2 2m0-2l-2 2" stroke="#cfcfcf" stroke-width="0.7"/><rect x="1229.5" y="74.2" width="2.2" height="2.2" fill="none" stroke="#cfcfcf" stroke-width="0.7"/></svg>
<span class="t" style="top:64.92px;font-size:8.4px;line-height:11.76px;color:#cfcfcf;left:1237.40px;transform-origin:0 50%;transform:scaleX(0.608);">レイヤープロパティ</span>
<div style="left:1358.00px;top:79.30px;width:8.00px;height:188.00px;background:#2a2a2a;"></div>
<div style="left:1197.50px;top:85.20px;width:3.00px;height:0.70px;background:#4a4a4a;"></div>
<span class="t" style="top:80.35px;font-size:8.5px;line-height:11.90px;color:#d4d4d4;left:1201.20px;transform-origin:0 50%;">効果</span>
<div style="left:1219.40px;top:85.20px;width:136.60px;height:0.70px;background:#4a4a4a;"></div>
<div style="left:1275.00px;top:91.20px;width:81.70px;height:19.80px;background:#3a3a3a;border:0.7px solid #555;border-radius:1.5px;"></div>
<div style="left:1275.20px;top:91.50px;width:17.60px;height:19.20px;background:#6b80b5;"></div>
<svg style="left:0.00px;top:0.00px;" width="1440.00" height="809.00" viewBox="0 0 1440 809"><circle cx="1283.8" cy="100.9" r="5.6" fill="none" stroke="#dfe3ee" stroke-width="0.9"/><circle cx="1299.6" cy="102.4" r="4.2" fill="#6a6a6a"/><circle cx="1302.6" cy="99.8" r="4.4" fill="#3a3a3a" stroke="#d8d8d8" stroke-width="1"/><path d="M1300 103.4A4.4 4.4 0 0 0 1306.8 100.6L1302.6 99.8z" fill="#d8d8d8"/><rect x="1313.2" y="95.4" width="2" height="2" fill="#d8d8d8"/><rect x="1317.6" y="95.4" width="2" height="2" fill="#d8d8d8"/><rect x="1322.0" y="95.4" width="2" height="2" fill="#d8d8d8"/><rect x="1315.4" y="97.6" width="2" height="2" fill="#d8d8d8"/><rect x="1319.8" y="97.6" width="2" height="2" fill="#d8d8d8"/><rect x="1313.2" y="99.8" width="2" height="2" fill="#d8d8d8"/><rect x="1317.6" y="99.8" width="2" height="2" fill="#d8d8d8"/><rect x="1322.0" y="99.8" width="2" height="2" fill="#d8d8d8"/><rect x="1315.4" y="102.0" width="2" height="2" fill="#d8d8d8"/><rect x="1319.8" y="102.0" width="2" height="2" fill="#d8d8d8"/><rect x="1313.2" y="104.2" width="2" height="2" fill="#d8d8d8"/><rect x="1317.6" y="104.2" width="2" height="2" fill="#d8d8d8"/><rect x="1322.0" y="104.2" width="2" height="2" fill="#d8d8d8"/><rect x="1330.6" y="95.8" width="8.4" height="8.4" rx="1.6" fill="none" stroke="#d8d8d8" stroke-width="1"/><rect x="1333" y="98.4" width="8.2" height="8.2" rx="1.6" fill="#8a8a8a" stroke="#aaa" stroke-width="0.8"/><path d="M1345.6 99.2L1349.4 103L1353.2 99.2" fill="none" stroke="#d8d8d8" stroke-width="1.1"/></svg>
<span class="t" style="top:118.75px;font-size:8.5px;line-height:11.90px;color:#d4d4d4;left:1208.90px;transform-origin:0 50%;transform:scaleX(0.985);">境界効果</span>
<div style="left:1248.70px;top:114.50px;width:108.00px;height:19.40px;background:#444;border:0.7px solid #555;border-radius:1.5px;"></div>
<div style="left:1248.90px;top:114.80px;width:53.20px;height:18.80px;background:#6b80b5;"></div>
<svg style="left:1251.80px;top:118.80px;" width="11.00" height="11.00" viewBox="0 0 11 11"><circle cx="5.5" cy="5.5" r="4.9" fill="none" stroke="#d8dcec" stroke-width="0.9"/></svg>
<span class="t" style="top:118.85px;font-size:8.5px;line-height:11.90px;color:#e4e6f0;left:1264.20px;transform-origin:0 50%;transform:scaleX(0.706);">フチ</span>
<svg style="left:1306.20px;top:118.60px;" width="12.00" height="12.00" viewBox="0 0 12 12"><path d="M6.2 0.6a5.4 5.2 0 1 1-3 9.5C2 11 1 11.4 0.6 11.4C1.4 10.4 1.6 9.4 1.2 8A5.4 5.2 0 0 1 6.2 0.6z" fill="#d8d8d8"/></svg>
<span class="t" style="top:118.85px;font-size:8.5px;line-height:11.90px;color:#dcdcdc;left:1319.80px;transform-origin:0 50%;transform:scaleX(0.985);">水彩境界</span>
<span class="t" style="top:136.65px;font-size:8.5px;line-height:11.90px;color:#d4d4d4;left:1207.90px;transform-origin:0 50%;transform:scaleX(0.767);">フチの太さ</span>
<div style="left:1226.80px;top:148.90px;width:72.50px;height:7.20px;border-bottom:0.8px solid #555;"></div>
<div style="left:1226.80px;top:148.90px;width:14.80px;height:7.00px;background:#444;border:0.7px solid #555;"></div>
<span class="t" style="top:142.85px;font-size:8.5px;line-height:11.90px;color:#d4d4d4;right:108.40px;transform-origin:100% 50%;transform:scaleX(0.967);">3.0</span>
<svg style="left:1333.20px;top:141.80px;" width="7.20" height="12.40" viewBox="0 0 7.2 12.4"><path d="M0.4 4.8L3.6 1.3L6.8 4.8M0.4 7.6L3.6 11.1L6.8 7.6" stroke="#cfcfcf" stroke-width="1.1" fill="none"/></svg>
<span class="t" style="top:165.05px;font-size:8.5px;line-height:11.90px;color:#d4d4d4;left:1207.90px;transform-origin:0 50%;transform:scaleX(0.809);">フチの色</span>
<div style="left:1259.50px;top:160.80px;width:76.00px;height:19.20px;background:#000;border:1.2px solid #333;border-radius:1.5px;"></div>
<svg style="left:1338.60px;top:162.60px;" width="16.40" height="16.40" viewBox="0 0 18 18"><path d="M4.4 7L9.4 1.8L14.6 7" fill="none" stroke="#e4e4e4" stroke-width="1" stroke-linejoin="round"/><path d="M2.8 6.8H15L16.8 9L9.4 16.6L4.2 11.2C3.4 10.6 3 11.4 3 13.2C1.4 12.6 1 9 2.8 6.8z" fill="#e4e4e4"/></svg>
<div style="left:1208.90px;top:185.50px;width:11.60px;height:11.80px;background:#3c3c3c;border:0.7px solid #5a5a5a;border-radius:1.5px;"></div>
<svg style="left:1208.90px;top:185.50px;" width="11.60" height="11.80" viewBox="0 0 11.6 11.8"><path d="M2.3 6.2L4.7 9.2L9.4 2.6" stroke="#f4f4f4" stroke-width="1.55" fill="none"/></svg>
<span class="t" style="top:186.95px;font-size:8.5px;line-height:11.90px;color:#d4d4d4;left:1221.60px;transform-origin:0 50%;transform:scaleX(0.728);">フチのアンチエイリアス</span>
<div style="left:1197.50px;top:207.50px;width:3.00px;height:0.70px;background:#4a4a4a;"></div>
<span class="t" style="top:202.65px;font-size:8.5px;line-height:11.90px;color:#d4d4d4;left:1201.20px;transform-origin:0 50%;transform:scaleX(0.973);">表現色</span>
<div style="left:1227.70px;top:207.50px;width:128.30px;height:0.70px;background:#4a4a4a;"></div>
<div style="left:1208.90px;top:216.30px;width:104.00px;height:19.40px;background:#3a3a3a;border:0.7px solid #555;border-radius:1.5px;"></div>
<svg style="left:1237.00px;top:219.40px;" width="14.00" height="13.40" viewBox="0 0 14 13.4"><circle cx="6.9" cy="4.3" r="3.7" fill="#ff5a5a"/><circle cx="4.2" cy="8.8" r="3.7" fill="#4fd45a"/><circle cx="9.6" cy="8.8" r="3.7" fill="#4f9cff"/><circle cx="6.9" cy="7.3" r="1.6" fill="#f4f4f4"/></svg>
<span class="t" style="top:221.05px;font-size:8.5px;line-height:11.90px;color:#dcdcdc;left:1253.80px;transform-origin:0 50%;transform:scaleX(0.731);">カラー</span>
<svg style="left:1300.40px;top:223.20px;" width="9.40" height="6.00" viewBox="0 0 9.4 6"><path d="M0.6 0.8L4.7 5L8.8 0.8" stroke="#ddd" stroke-width="1.1" fill="none"/></svg>
<svg style="left:1200.80px;top:274.00px;" width="7.00" height="7.00" viewBox="0 0 7 7"><path d="M0 0.6h6.6M0 3.3h6.6M0 6h6.6" stroke="#5c5c5c" stroke-width="0.9"/></svg>
<div style="left:1213.00px;top:272.80px;width:48.00px;height:13.00px;background:#333;border-radius:1px 1px 0 0;"></div>
<div style="left:1195.20px;top:285.60px;width:170.60px;height:69.80px;background:#333;"></div>
<svg style="left:0.00px;top:0.00px;" width="1440.00" height="809.00" viewBox="0 0 1440 809"><path d="M1225.5 275.6L1230.7 278.8L1225.5 282.0L1220.3 278.8z" fill="none" stroke="#e0e0e0" stroke-width="1" stroke-linejoin="round"/><path d="M1220.3 281.8L1225.5 284.9L1230.7 281.8" fill="none" stroke="#e0e0e0" stroke-width="1" stroke-linejoin="round"/><path d="M1220.3 284.7L1225.5 287.9L1230.7 284.7" fill="none" stroke="#e0e0e0" stroke-width="1" stroke-linejoin="round"/></svg>
<span class="t" style="top:275.92px;font-size:8.4px;line-height:11.76px;color:#cfcfcf;left:1237.40px;transform-origin:0 50%;transform:scaleX(0.652);">レイヤー</span>
<div style="left:1195.50px;top:289.90px;width:33.30px;height:20.40px;background:#444;border:0.7px solid #5a5a5a;border-radius:1.5px;"></div>
<svg style="left:1199.20px;top:294.40px;" width="12.40" height="11.40" viewBox="0 0 12.4 11.4"><rect x="0.5" y="0.5" width="11.4" height="10.4" rx="1.6" fill="none" stroke="#9a9a9a" stroke-width="0.9"/></svg>
<svg style="left:1216.60px;top:297.60px;" width="9.00" height="5.60" viewBox="0 0 9 5.6"><path d="M0.6 0.7L4.5 4.7L8.4 0.7" stroke="#ddd" stroke-width="1" fill="none"/></svg>
<div style="left:1231.00px;top:289.90px;width:49.20px;height:20.40px;background:#444;border:0.7px solid #5a5a5a;border-radius:1.5px;"></div>
<span class="t" style="top:295.05px;font-size:8.5px;line-height:11.90px;color:#dcdcdc;left:1240.70px;transform-origin:0 50%;transform:scaleX(1.024);">通常</span>
<svg style="left:1268.40px;top:297.60px;" width="9.00" height="5.60" viewBox="0 0 9 5.6"><path d="M0.6 0.7L4.5 4.7L8.4 0.7" stroke="#ddd" stroke-width="1" fill="none"/></svg>
<svg style="left:1285.00px;top:294.70px;overflow:hidden;" width="49.40" height="7.80" viewBox="0 0 49.4 7.8"><rect x="0.00" y="0.00" width="3.95" height="3.95" fill="rgb(255,255,255)"/><rect x="3.90" y="0.00" width="3.95" height="3.95" fill="rgb(210,210,210)"/><rect x="7.80" y="0.00" width="3.95" height="3.95" fill="rgb(240,240,240)"/><rect x="11.70" y="0.00" width="3.95" height="3.95" fill="rgb(198,198,198)"/><rect x="15.60" y="0.00" width="3.95" height="3.95" fill="rgb(225,225,225)"/><rect x="19.50" y="0.00" width="3.95" height="3.95" fill="rgb(186,186,186)"/><rect x="23.40" y="0.00" width="3.95" height="3.95" fill="rgb(210,210,210)"/><rect x="27.30" y="0.00" width="3.95" height="3.95" fill="rgb(175,175,175)"/><rect x="31.20" y="0.00" width="3.95" height="3.95" fill="rgb(195,195,195)"/><rect x="35.10" y="0.00" width="3.95" height="3.95" fill="rgb(163,163,163)"/><rect x="39.00" y="0.00" width="3.95" height="3.95" fill="rgb(180,180,180)"/><rect x="42.90" y="0.00" width="3.95" height="3.95" fill="rgb(151,151,151)"/><rect x="46.80" y="0.00" width="3.95" height="3.95" fill="rgb(165,165,165)"/><rect x="0.00" y="3.90" width="3.95" height="3.95" fill="rgb(215,215,215)"/><rect x="3.90" y="3.90" width="3.95" height="3.95" fill="rgb(248,248,248)"/><rect x="7.80" y="3.90" width="3.95" height="3.95" fill="rgb(204,204,204)"/><rect x="11.70" y="3.90" width="3.95" height="3.95" fill="rgb(233,233,233)"/><rect x="15.60" y="3.90" width="3.95" height="3.95" fill="rgb(192,192,192)"/><rect x="19.50" y="3.90" width="3.95" height="3.95" fill="rgb(218,218,218)"/><rect x="23.40" y="3.90" width="3.95" height="3.95" fill="rgb(180,180,180)"/><rect x="27.30" y="3.90" width="3.95" height="3.95" fill="rgb(203,203,203)"/><rect x="31.20" y="3.90" width="3.95" height="3.95" fill="rgb(169,169,169)"/><rect x="35.10" y="3.90" width="3.95" height="3.95" fill="rgb(188,188,188)"/><rect x="39.00" y="3.90" width="3.95" height="3.95" fill="rgb(157,157,157)"/><rect x="42.90" y="3.90" width="3.95" height="3.95" fill="rgb(173,173,173)"/><rect x="46.80" y="3.90" width="3.95" height="3.95" fill="rgb(145,145,145)"/></svg>
<div style="left:1333.80px;top:290.20px;width:2.80px;height:16.60px;background:#757575;border-radius:1.2px;"></div>
<span class="t" style="top:293.45px;font-size:8.5px;line-height:11.90px;color:#d4d4d4;right:86.40px;transform-origin:100% 50%;transform:scaleX(0.957);">100</span>
<svg style="left:1355.60px;top:292.20px;" width="7.20" height="12.40" viewBox="0 0 7.2 12.4"><path d="M0.4 4.8L3.6 1.3L6.8 4.8M0.4 7.6L3.6 11.1L6.8 7.6" stroke="#cfcfcf" stroke-width="1.1" fill="none"/></svg>
<div style="left:1309.80px;top:311.70px;width:26.40px;height:19.40px;background:#3b3b3b;border-radius:1.5px;"></div>
<div style="left:1337.60px;top:311.70px;width:26.40px;height:19.40px;background:#3b3b3b;border-radius:1.5px;"></div>
<svg style="left:0.00px;top:0.00px;" width="1440.00" height="809.00" viewBox="0 0 1440 809"><rect x="1223.6" y="315.2" width="8.8" height="8.8" rx="1.6" fill="none" stroke="#d4d4d4" stroke-width="0.9" stroke-dasharray="1.2 1"/><rect x="1221" y="318" width="8.8" height="8.8" rx="1.6" fill="#333" stroke="#888" stroke-width="0.9"/><rect x="1223.8" y="318.2" width="5.8" height="5.8" fill="#d4d4d4"/><path d="M1248.6 326.8L1249.2 319.6H1250.8L1251.4 326.8z" fill="#d4d4d4"/><rect x="1248.2" y="316.8" width="3.6" height="2.4" fill="#d4d4d4"/><path d="M1248.4 316.4L1250 315L1251.6 316.4z" fill="#d4d4d4"/><path d="M1247.6 317.6L1244 316M1247.6 318.4L1244 320.2M1252.4 317.6L1256 316M1252.4 318.4L1256 320.2" stroke="#d4d4d4" stroke-width="0.8"/><rect x="1269.4" y="321.0" width="8.4" height="6.0" rx="0.8" fill="#d4d4d4"/><path d="M1271.0 321.2V318.8C1271.0 315.4 1276.2 315.4 1276.2 318.8V321.2" fill="none" stroke="#d4d4d4" stroke-width="1.1"/><rect x="1293.4" y="315.0" width="2.8" height="2.8" fill="#d4d4d4"/><rect x="1299.0" y="315.0" width="2.8" height="2.8" fill="#d4d4d4"/><rect x="1296.2" y="317.8" width="2.8" height="2.8" fill="#d4d4d4"/><rect x="1301.8" y="317.8" width="2.8" height="2.8" fill="#d4d4d4"/><rect x="1299.0" y="320.6" width="2.8" height="2.8" fill="#d4d4d4"/><rect x="1301.8" y="323.4" width="2.8" height="2.8" fill="#d4d4d4"/><rect x="1296.2" y="323.4" width="2.8" height="2.8" fill="#d4d4d4"/><rect x="1290.6" y="319.6" width="7.4" height="7.8" fill="#333"/><rect x="1291.5" y="322.4" width="6.2" height="4.5" rx="0.8" fill="#d4d4d4"/><path d="M1293.1 322.6V320.2C1293.1 316.8 1296.1 316.8 1296.1 320.2V322.6" fill="none" stroke="#d4d4d4" stroke-width="1.1"/><rect x="1314" y="316" width="10.6" height="10.6" rx="2" fill="#5c5c5c"/><circle cx="1319.6" cy="321" r="3.4" fill="#3b3b3b"/><path d="M1321.6 323.4l5 5m0-5l-5 5" stroke="#5c5c5c" stroke-width="0.9"/><path d="M1326 321.4l2.4 2.4L1332.6 319.6" fill="none" stroke="#5c5c5c" stroke-width="0.9"/><path d="M1342.2 316H1353L1342.2 327z" fill="#5c5c5c"/><path d="M1344.6 318.4H1348.2L1344.6 322z" fill="#3b3b3b"/><path d="M1349.6 323.4l5 5m0-5l-5 5" stroke="#5c5c5c" stroke-width="0.9"/><path d="M1354 321.4l2.4 2.4L1360.6 319.6" fill="none" stroke="#5c5c5c" stroke-width="0.9"/><path d="M1209.4 348.79999999999995H1216.6C1217.4 348.79999999999995 1217.8 348.4 1217.8 347.59999999999997V339.0C1217.8 338.2 1217.4 337.79999999999995 1216.6 337.79999999999995H1207.6C1206.8 337.79999999999995 1206.4 338.2 1206.4 339.0V346.0z" fill="none" stroke="#d4d4d4" stroke-width="1"/><path d="M1206.4 345.79999999999995C1208 346.2 1209 347.2 1209.4 348.79999999999995z" fill="#d4d4d4"/><circle cx="1217" cy="347.6" r="3.2" fill="#d4d4d4" stroke="#333" stroke-width="0.7"/><path d="M1217 345.8v3.6M1215.2 347.6h3.6" stroke="#333" stroke-width="0.9"/><path d="M1232.8000000000002 348.79999999999995H1240.0C1240.8000000000002 348.79999999999995 1241.2 348.4 1241.2 347.59999999999997V339.0C1241.2 338.2 1240.8000000000002 337.79999999999995 1240.0 337.79999999999995H1231.0C1230.2 337.79999999999995 1229.8000000000002 338.2 1229.8000000000002 339.0V346.0z" fill="none" stroke="#d4d4d4" stroke-width="1"/><path d="M1229.8000000000002 345.79999999999995C1231.4 346.2 1232.4 347.2 1232.8000000000002 348.79999999999995z" fill="#d4d4d4"/><circle cx="1235.4" cy="343" r="3.2" fill="none" stroke="#d4d4d4" stroke-width="0.8"/><path d="M1235.4 343v3.2M1235.4 343l-2.8-1.6M1235.4 343l2.8-1.6" stroke="#d4d4d4" stroke-width="0.7"/><circle cx="1240.4" cy="347.6" r="3.2" fill="#d4d4d4" stroke="#333" stroke-width="0.7"/><path d="M1240.4 345.8v3.6M1238.6000000000001 347.6h3.6" stroke="#333" stroke-width="0.9"/><path d="M1252.6 348V338.6C1252.6 338 1253 337.6 1253.6 337.6H1257L1258.4 339.4H1263.2C1263.8 339.4 1264.2 339.8 1264.2 340.4V348z" fill="#d4d4d4"/><path d="M1252.6 341.4h11.6" stroke="#333" stroke-width="0.8"/><circle cx="1264" cy="347.8" r="3.2" fill="#d4d4d4" stroke="#333" stroke-width="0.7"/><path d="M1264 346.0v3.6M1262.2 347.8h3.6" stroke="#333" stroke-width="0.9"/><rect x="1281.6000000000001" y="336.6" width="7.8" height="7.8" rx="1.6" fill="none" stroke="#5c5c5c" stroke-width="0.9"/><rect x="1276.4" y="341.6" width="7.8" height="7.8" rx="1.6" fill="none" stroke="#5c5c5c" stroke-width="0.9"/><path d="M1282.8000000000002 343.6L1279.8000000000002 346.6M1279.6000000000001 344.4V346.8H1282.0" fill="none" stroke="#5c5c5c" stroke-width="0.8"/><rect x="1304.8" y="336.6" width="7.8" height="7.8" rx="1.6" fill="none" stroke="#5c5c5c" stroke-width="0.9"/><rect x="1299.6" y="341.6" width="7.8" height="7.8" rx="1.6" fill="none" stroke="#5c5c5c" stroke-width="0.9"/><path d="M1306.0 343.6L1303.0 346.6M1302.8 344.4V346.8H1305.1999999999998" fill="none" stroke="#5c5c5c" stroke-width="0.8"/><rect x="1282.6" y="338" width="3.6" height="3.6" fill="#4c4c4c"/><rect x="1324" y="337.4" width="12" height="11.8" rx="1.8" fill="#e0e0e0"/><circle cx="1330" cy="343.3" r="3.5" fill="#333"/><path d="M1349.2 339.2h9.2" stroke="#d4d4d4" stroke-width="1.2"/><path d="M1351.96 339V337.5H1355.64V339" fill="none" stroke="#d4d4d4" stroke-width="0.9"/><path d="M1350.0 340.4H1357.6000000000001V348.0C1357.6000000000001 349.0 1357.0 349.4 1356.2 349.4H1351.4C1350.6000000000001 349.4 1350.0 349.0 1350.0 348.0z" fill="none" stroke="#d4d4d4" stroke-width="1"/><path d="M1351.96 341.6V347.79999999999995" stroke="#d4d4d4" stroke-width="0.8"/><path d="M1353.80 341.6V347.79999999999995" stroke="#d4d4d4" stroke-width="0.8"/><path d="M1355.64 341.6V347.79999999999995" stroke="#d4d4d4" stroke-width="0.8"/></svg>
<div style="left:1195.20px;top:355.40px;width:21.00px;height:454.00px;background:#262626;"></div>
<div style="left:1216.20px;top:355.40px;width:0.90px;height:454.00px;background:#181818;"></div>
<div style="left:1217.10px;top:355.40px;width:18.00px;height:454.00px;background:#262626;"></div>
<div style="left:1235.10px;top:355.40px;width:0.90px;height:454.00px;background:#181818;"></div>
<div style="left:1236.00px;top:355.40px;width:26.00px;height:454.00px;background:#252525;"></div>
<div style="left:1262.00px;top:355.40px;width:96.00px;height:454.00px;background:#232323;"></div>
<div style="left:1358.00px;top:355.40px;width:8.00px;height:454.00px;background:#2a2a2a;"></div>
<div style="left:1359.40px;top:481.00px;width:5.40px;height:74.00px;background:#404040;border-radius:2.7px;"></div>
<div style="left:1262.00px;top:374.80px;width:96.00px;height:0.90px;background:#141414;"></div>
<div style="left:1268.90px;top:335.00px;width:37.20px;height:37.20px;background:#111;clip-path:inset(20.4px 0 0 0);"></div>
<div style="left:1269.80px;top:335.90px;width:35.50px;height:35.40px;background:#c3c3c3;clip-path:inset(19.4px 0 0 0);box-shadow:inset 1.4px 0 0 #cfcfcf, inset 0 1.2px 0 #cdcdcd;"></div>
<svg style="left:0.00px;top:0.00px;clip-path:inset(355.4px 0 0 0);" width="1440.00" height="809.00" viewBox="0 0 1440 809"><path d="M1291.8 359.9l4 6M1294.8 358.9l5 7M1298.8 357.9l4 8M1302.8 359.9l2 5" stroke="#7c7c7c" stroke-width="0.5" fill="none"/></svg>
<span class="t" style="top:363.05px;font-size:8.5px;line-height:11.90px;color:#d2d2d2;left:1313.40px;transform-origin:0 50%;transform:scaleX(0.815);">レイヤー 80</span>
<div style="left:1262.00px;top:418.00px;width:96.00px;height:0.90px;background:#141414;"></div>
<div style="left:1268.90px;top:378.20px;width:37.20px;height:37.20px;background:#111;"></div>
<div style="left:1269.80px;top:379.10px;width:35.50px;height:35.40px;background:#c3c3c3;box-shadow:inset 1.4px 0 0 #cfcfcf, inset 0 1.2px 0 #cdcdcd;"></div>
<svg style="left:0.00px;top:0.00px;" width="1440.00" height="809.00" viewBox="0 0 1440 809"><path d="M1270.2 397.7C1273.8 396.7 1275.8 394.09999999999997 1279.8 392.49999999999994C1283.8 390.7 1287.8 391.09999999999997 1291.8 390.09999999999997C1296.8 389.7 1300.8 391.09999999999997 1305.2 389.09999999999997" stroke="#8a8a8a" stroke-width="0.55" fill="none"/><path d="M1270.3999999999999 402.49999999999994C1273.8 401.49999999999994 1276.8 399.09999999999997 1280.8 397.7C1284.8 396.49999999999994 1289.8 397.09999999999997 1293.8 396.7C1297.8 396.49999999999994 1301.8 397.49999999999994 1305.2 398.7" stroke="#8a8a8a" stroke-width="0.55" fill="none"/><path d="M1270.8 399.49999999999994C1274.8 399.09999999999997 1277.8 396.09999999999997 1281.8 394.7C1284.8 393.49999999999994 1286.8 392.7 1289.8 392.09999999999997L1293.2 390.7M1281.8 396.7L1283.8 398.09999999999997M1285.8 393.9C1290.8 393.49999999999994 1296.8 393.29999999999995 1302.8 393.09999999999997M1288.8 392.9V395.9M1290.8 394.9C1294.8 395.09999999999997 1298.8 394.49999999999994 1301.8 394.09999999999997M1300.8 391.7L1305.2 395.49999999999994M1271.8 400.29999999999995L1273.2 401.9M1293.8 393.49999999999994V395.7M1297.8 393.29999999999995V395.49999999999994" stroke="#777" stroke-width="0.5" fill="none"/></svg>
<span class="t" style="top:382.55px;font-size:8.5px;line-height:11.90px;color:#d2d2d2;left:1313.40px;transform-origin:0 50%;transform:scaleX(0.900);">100 % 通常</span>
<span class="t" style="top:406.25px;font-size:8.5px;line-height:11.90px;color:#d2d2d2;left:1313.40px;transform-origin:0 50%;transform:scaleX(0.815);">レイヤー 80</span>
<svg style="left:1198.80px;top:393.10px;" width="12.40" height="7.60" viewBox="0 0 12.4 7.6"><path d="M0.5 4.1C2.4 1.4 4.4 0.6 6.2 0.6C8 0.6 10 1.4 11.9 4.1C10 6.4 8 7.1 6.2 7.1C4.4 7.1 2.4 6.4 0.5 4.1z" fill="none" stroke="#e4e4e4" stroke-width="0.9"/><circle cx="6.2" cy="4" r="2.2" fill="#e4e4e4"/><path d="M1.2 3.2C3.2 1 9.2 1 11.2 3.2" fill="none" stroke="#e4e4e4" stroke-width="1.2"/></svg>
<div style="left:1221.30px;top:392.20px;width:9.40px;height:8.50px;background:#2a2a2a;border:0.9px solid #1c1c1c;border-radius:1.6px;"></div>
<div style="left:1262.00px;top:461.20px;width:96.00px;height:0.90px;background:#141414;"></div>
<div style="left:1268.90px;top:421.40px;width:37.20px;height:37.20px;background:#111;"></div>
<div style="left:1269.80px;top:422.30px;width:35.50px;height:35.40px;background:#c3c3c3;box-shadow:inset 1.4px 0 0 #cfcfcf, inset 0 1.2px 0 #cdcdcd;"></div>
<svg style="left:0.00px;top:0.00px;" width="1440.00" height="809.00" viewBox="0 0 1440 809"><path d="M1270.2 441.9C1273.8 440.9 1275.8 438.29999999999995 1279.8 436.69999999999993C1283.8 434.9 1287.8 435.29999999999995 1291.8 434.29999999999995C1296.8 433.9 1300.8 435.29999999999995 1305.2 433.29999999999995" stroke="#8a8a8a" stroke-width="0.55" fill="none"/><path d="M1270.3999999999999 446.69999999999993C1273.8 445.69999999999993 1276.8 443.29999999999995 1280.8 441.9C1284.8 440.69999999999993 1289.8 441.29999999999995 1293.8 440.9C1297.8 440.69999999999993 1301.8 441.69999999999993 1305.2 442.9" stroke="#8a8a8a" stroke-width="0.55" fill="none"/><path d="M1270.8 443.69999999999993C1274.8 443.29999999999995 1277.8 440.29999999999995 1281.8 438.9C1284.8 437.69999999999993 1286.8 436.9 1289.8 436.29999999999995L1293.2 434.9M1281.8 440.9L1283.8 442.29999999999995M1285.8 438.09999999999997C1290.8 437.69999999999993 1296.8 437.49999999999994 1302.8 437.29999999999995M1288.8 437.09999999999997V440.09999999999997M1290.8 439.09999999999997C1294.8 439.29999999999995 1298.8 438.69999999999993 1301.8 438.29999999999995M1300.8 435.9L1305.2 439.69999999999993M1271.8 444.49999999999994L1273.2 446.09999999999997M1293.8 437.69999999999993V439.9M1297.8 437.49999999999994V439.69999999999993" stroke="#777" stroke-width="0.5" fill="none"/></svg>
<span class="t" style="top:425.75px;font-size:8.5px;line-height:11.90px;color:#d2d2d2;left:1313.40px;transform-origin:0 50%;transform:scaleX(0.900);">100 % 通常</span>
<span class="t" style="top:449.45px;font-size:8.5px;line-height:11.90px;color:#d2d2d2;left:1313.40px;transform-origin:0 50%;transform:scaleX(0.815);">レイヤー 80</span>
<div style="left:1200.40px;top:435.40px;width:9.40px;height:8.50px;background:#2a2a2a;border:0.9px solid #1c1c1c;border-radius:1.6px;"></div>
<div style="left:1221.30px;top:435.40px;width:9.40px;height:8.50px;background:#2a2a2a;border:0.9px solid #1c1c1c;border-radius:1.6px;"></div>
<div style="left:1262.00px;top:504.40px;width:96.00px;height:0.90px;background:#141414;"></div>
<div style="left:1268.90px;top:464.60px;width:37.20px;height:37.20px;background:#111;"></div>
<div style="left:1269.80px;top:465.50px;width:35.50px;height:35.40px;background:#c3c3c3;box-shadow:inset 1.4px 0 0 #cfcfcf, inset 0 1.2px 0 #cdcdcd;"></div>
<svg style="left:0.00px;top:0.00px;" width="1440.00" height="809.00" viewBox="0 0 1440 809"><path d="M1297.3999999999999 465.5V483.3H1278.8M1278.8 487.1H1288.3999999999999V500.7" stroke="#1c1c1c" stroke-width="1" fill="none"/></svg>
<span class="t" style="top:468.95px;font-size:8.5px;line-height:11.90px;color:#d2d2d2;left:1313.40px;transform-origin:0 50%;transform:scaleX(0.900);">100 % 通常</span>
<span class="t" style="top:492.65px;font-size:8.5px;line-height:11.90px;color:#d2d2d2;left:1313.40px;transform-origin:0 50%;transform:scaleX(0.815);">レイヤー 83</span>
<div style="left:1200.40px;top:478.60px;width:9.40px;height:8.50px;background:#2a2a2a;border:0.9px solid #1c1c1c;border-radius:1.6px;"></div>
<div style="left:1221.30px;top:478.60px;width:9.40px;height:8.50px;background:#2a2a2a;border:0.9px solid #1c1c1c;border-radius:1.6px;"></div>
<div style="left:1262.00px;top:547.60px;width:96.00px;height:0.90px;background:#141414;"></div>
<div style="left:1268.90px;top:507.80px;width:37.20px;height:37.20px;background:#111;"></div>
<div style="left:1269.80px;top:508.70px;width:35.50px;height:35.40px;background:#c3c3c3;box-shadow:inset 1.4px 0 0 #cfcfcf, inset 0 1.2px 0 #cdcdcd;"></div>
<svg style="left:0.00px;top:0.00px;" width="1440.00" height="809.00" viewBox="0 0 1440 809"><path d="M1270.2 525.3000000000001C1273.8 524.3000000000001 1275.8 521.7 1279.8 520.1C1283.8 518.3000000000001 1287.8 518.7 1291.8 517.7C1296.8 517.3000000000001 1300.8 518.7 1305.2 516.7" stroke="#8a8a8a" stroke-width="0.55" fill="none"/><path d="M1270.3999999999999 530.1C1273.8 529.1 1276.8 526.7 1280.8 525.3000000000001C1284.8 524.1 1289.8 524.7 1293.8 524.3000000000001C1297.8 524.1 1301.8 525.1 1305.2 526.3000000000001" stroke="#8a8a8a" stroke-width="0.55" fill="none"/><path d="M1270.8 527.1C1274.8 526.7 1277.8 523.7 1281.8 522.3000000000001C1284.8 521.1 1286.8 520.3000000000001 1289.8 519.7L1293.2 518.3000000000001M1281.8 524.3000000000001L1283.8 525.7M1285.8 521.5C1290.8 521.1 1296.8 520.9000000000001 1302.8 520.7M1288.8 520.5V523.5M1290.8 522.5C1294.8 522.7 1298.8 522.1 1301.8 521.7M1300.8 519.3000000000001L1305.2 523.1M1271.8 527.9000000000001L1273.2 529.5M1293.8 521.1V523.3000000000001M1297.8 520.9000000000001V523.1" stroke="#777" stroke-width="0.5" fill="none"/></svg>
<span class="t" style="top:512.15px;font-size:8.5px;line-height:11.90px;color:#d2d2d2;left:1313.40px;transform-origin:0 50%;transform:scaleX(0.900);">100 % 通常</span>
<span class="t" style="top:535.85px;font-size:8.5px;line-height:11.90px;color:#d2d2d2;left:1313.40px;transform-origin:0 50%;transform:scaleX(0.815);">レイヤー 80</span>
<div style="left:1200.40px;top:521.80px;width:9.40px;height:8.50px;background:#2a2a2a;border:0.9px solid #1c1c1c;border-radius:1.6px;"></div>
<div style="left:1221.30px;top:521.80px;width:9.40px;height:8.50px;background:#2a2a2a;border:0.9px solid #1c1c1c;border-radius:1.6px;"></div>
<div style="left:1262.00px;top:590.80px;width:96.00px;height:0.90px;background:#141414;"></div>
<div style="left:1268.90px;top:551.00px;width:37.20px;height:37.20px;background:#111;"></div>
<div style="left:1269.80px;top:551.90px;width:35.50px;height:35.40px;background:#c3c3c3;box-shadow:inset 1.4px 0 0 #cfcfcf, inset 0 1.2px 0 #cdcdcd;"></div>
<svg style="left:0.00px;top:0.00px;" width="1440.00" height="809.00" viewBox="0 0 1440 809"><path d="M1270.2 567.5C1273.8 566.5 1275.8 563.9 1279.8 562.3C1283.8 560.5 1287.8 560.9 1291.8 559.9C1296.8 559.5 1300.8 560.9 1305.2 558.9" stroke="#8a8a8a" stroke-width="0.55" fill="none"/><path d="M1270.3999999999999 572.3C1273.8 571.3 1276.8 568.9 1280.8 567.5C1284.8 566.3 1289.8 566.9 1293.8 566.5C1297.8 566.3 1301.8 567.3 1305.2 568.5" stroke="#8a8a8a" stroke-width="0.55" fill="none"/><path d="M1270.8 569.3C1274.8 568.9 1277.8 565.9 1281.8 564.5C1284.8 563.3 1286.8 562.5 1289.8 561.9L1293.2 560.5M1281.8 566.5L1283.8 567.9M1285.8 563.6999999999999C1290.8 563.3 1296.8 563.1 1302.8 562.9M1288.8 562.6999999999999V565.6999999999999M1290.8 564.6999999999999C1294.8 564.9 1298.8 564.3 1301.8 563.9M1300.8 561.5L1305.2 565.3M1271.8 570.1L1273.2 571.6999999999999M1293.8 563.3V565.5M1297.8 563.1V565.3" stroke="#777" stroke-width="0.5" fill="none"/></svg>
<span class="t" style="top:555.35px;font-size:8.5px;line-height:11.90px;color:#d2d2d2;left:1313.40px;transform-origin:0 50%;transform:scaleX(0.900);">100 % 通常</span>
<span class="t" style="top:579.05px;font-size:8.5px;line-height:11.90px;color:#d2d2d2;left:1313.40px;transform-origin:0 50%;transform:scaleX(0.815);">レイヤー 80</span>
<div style="left:1200.40px;top:565.00px;width:9.40px;height:8.50px;background:#2a2a2a;border:0.9px solid #1c1c1c;border-radius:1.6px;"></div>
<div style="left:1221.30px;top:565.00px;width:9.40px;height:8.50px;background:#2a2a2a;border:0.9px solid #1c1c1c;border-radius:1.6px;"></div>
<div style="left:1262.00px;top:634.00px;width:96.00px;height:0.90px;background:#141414;"></div>
<div style="left:1268.90px;top:594.20px;width:37.20px;height:37.20px;background:#111;"></div>
<div style="left:1269.80px;top:595.10px;width:35.50px;height:35.40px;background:#c3c3c3;box-shadow:inset 1.4px 0 0 #cfcfcf, inset 0 1.2px 0 #cdcdcd;"></div>
<svg style="left:0.00px;top:0.00px;" width="1440.00" height="809.00" viewBox="0 0 1440 809"><path d="M1270.2 611.7C1273.8 610.7 1275.8 608.1 1279.8 606.5C1283.8 604.7 1287.8 605.1 1291.8 604.1C1296.8 603.7 1300.8 605.1 1305.2 603.1" stroke="#8a8a8a" stroke-width="0.55" fill="none"/><path d="M1270.3999999999999 616.5C1273.8 615.5 1276.8 613.1 1280.8 611.7C1284.8 610.5 1289.8 611.1 1293.8 610.7C1297.8 610.5 1301.8 611.5 1305.2 612.7" stroke="#8a8a8a" stroke-width="0.55" fill="none"/><path d="M1270.8 613.5C1274.8 613.1 1277.8 610.1 1281.8 608.7C1284.8 607.5 1286.8 606.7 1289.8 606.1L1293.2 604.7M1281.8 610.7L1283.8 612.1M1285.8 607.9C1290.8 607.5 1296.8 607.3000000000001 1302.8 607.1M1288.8 606.9V609.9M1290.8 608.9C1294.8 609.1 1298.8 608.5 1301.8 608.1M1300.8 605.7L1305.2 609.5M1271.8 614.3000000000001L1273.2 615.9M1293.8 607.5V609.7M1297.8 607.3000000000001V609.5" stroke="#777" stroke-width="0.5" fill="none"/><path d="M1300.8 603.1c2 1 3 3 2.6 5" stroke="#8a8a8a" stroke-width="0.5" fill="none"/></svg>
<span class="t" style="top:598.55px;font-size:8.5px;line-height:11.90px;color:#d2d2d2;left:1313.40px;transform-origin:0 50%;transform:scaleX(0.900);">100 % 通常</span>
<span class="t" style="top:622.25px;font-size:8.5px;line-height:11.90px;color:#d2d2d2;left:1313.40px;transform-origin:0 50%;transform:scaleX(0.815);">レイヤー 80</span>
<div style="left:1200.40px;top:608.20px;width:9.40px;height:8.50px;background:#2a2a2a;border:0.9px solid #1c1c1c;border-radius:1.6px;"></div>
<div style="left:1221.30px;top:608.20px;width:9.40px;height:8.50px;background:#2a2a2a;border:0.9px solid #1c1c1c;border-radius:1.6px;"></div>
<div style="left:1262.00px;top:677.20px;width:96.00px;height:0.90px;background:#141414;"></div>
<div style="left:1268.90px;top:637.40px;width:37.20px;height:37.20px;background:#111;"></div>
<div style="left:1269.80px;top:638.30px;width:35.50px;height:35.40px;background:#c3c3c3;box-shadow:inset 1.4px 0 0 #cfcfcf, inset 0 1.2px 0 #cdcdcd;"></div>
<svg style="left:0.00px;top:0.00px;" width="1440.00" height="809.00" viewBox="0 0 1440 809"><path d="M1270.2 655.9000000000001C1273.8 654.9000000000001 1275.8 652.3000000000001 1279.8 650.7C1283.8 648.9000000000001 1287.8 649.3000000000001 1291.8 648.3000000000001C1296.8 647.9000000000001 1300.8 649.3000000000001 1305.2 647.3000000000001" stroke="#8a8a8a" stroke-width="0.55" fill="none"/><path d="M1270.3999999999999 660.7C1273.8 659.7 1276.8 657.3000000000001 1280.8 655.9000000000001C1284.8 654.7 1289.8 655.3000000000001 1293.8 654.9000000000001C1297.8 654.7 1301.8 655.7 1305.2 656.9000000000001" stroke="#8a8a8a" stroke-width="0.55" fill="none"/><path d="M1270.8 657.7C1274.8 657.3000000000001 1277.8 654.3000000000001 1281.8 652.9000000000001C1284.8 651.7 1286.8 650.9000000000001 1289.8 650.3000000000001L1293.2 648.9000000000001M1281.8 654.9000000000001L1283.8 656.3000000000001M1285.8 652.1C1290.8 651.7 1296.8 651.5000000000001 1302.8 651.3000000000001M1288.8 651.1V654.1M1290.8 653.1C1294.8 653.3000000000001 1298.8 652.7 1301.8 652.3000000000001M1300.8 649.9000000000001L1305.2 653.7M1271.8 658.5000000000001L1273.2 660.1M1293.8 651.7V653.9000000000001M1297.8 651.5000000000001V653.7" stroke="#777" stroke-width="0.5" fill="none"/><path d="M1300.8 647.3000000000001c2 1 3 3 2.6 5" stroke="#8a8a8a" stroke-width="0.5" fill="none"/></svg>
<span class="t" style="top:641.75px;font-size:8.5px;line-height:11.90px;color:#d2d2d2;left:1313.40px;transform-origin:0 50%;transform:scaleX(0.900);">100 % 通常</span>
<span class="t" style="top:665.45px;font-size:8.5px;line-height:11.90px;color:#d2d2d2;left:1313.40px;transform-origin:0 50%;transform:scaleX(0.815);">レイヤー 80</span>
<div style="left:1200.40px;top:651.40px;width:9.40px;height:8.50px;background:#2a2a2a;border:0.9px solid #1c1c1c;border-radius:1.6px;"></div>
<div style="left:1221.30px;top:651.40px;width:9.40px;height:8.50px;background:#2a2a2a;border:0.9px solid #1c1c1c;border-radius:1.6px;"></div>
<div style="left:1262.00px;top:720.40px;width:96.00px;height:0.90px;background:#141414;"></div>
<div style="left:1268.90px;top:680.60px;width:37.20px;height:37.20px;background:#111;"></div>
<div style="left:1269.80px;top:681.50px;width:35.50px;height:35.40px;background:#c3c3c3;box-shadow:inset 1.4px 0 0 #cfcfcf, inset 0 1.2px 0 #cdcdcd;"></div>
<svg style="left:0.00px;top:0.00px;" width="1440.00" height="809.00" viewBox="0 0 1440 809"><path d="M1270.2 699.1C1273.8 698.1 1275.8 695.5 1279.8 693.9C1283.8 692.1 1287.8 692.5 1291.8 691.5C1296.8 691.1 1300.8 692.5 1305.2 690.5" stroke="#8a8a8a" stroke-width="0.55" fill="none"/><path d="M1270.3999999999999 703.9C1273.8 702.9 1276.8 700.5 1280.8 699.1C1284.8 697.9 1289.8 698.5 1293.8 698.1C1297.8 697.9 1301.8 698.9 1305.2 700.1" stroke="#8a8a8a" stroke-width="0.55" fill="none"/><path d="M1270.8 700.9C1274.8 700.5 1277.8 697.5 1281.8 696.1C1284.8 694.9 1286.8 694.1 1289.8 693.5L1293.2 692.1M1281.8 698.1L1283.8 699.5M1285.8 695.3C1290.8 694.9 1296.8 694.7 1302.8 694.5M1288.8 694.3V697.3M1290.8 696.3C1294.8 696.5 1298.8 695.9 1301.8 695.5M1300.8 693.1L1305.2 696.9M1271.8 701.7L1273.2 703.3M1293.8 694.9V697.1M1297.8 694.7V696.9" stroke="#777" stroke-width="0.5" fill="none"/></svg>
<span class="t" style="top:684.95px;font-size:8.5px;line-height:11.90px;color:#d2d2d2;left:1313.40px;transform-origin:0 50%;transform:scaleX(0.900);">100 % 通常</span>
<span class="t" style="top:708.65px;font-size:8.5px;line-height:11.90px;color:#d2d2d2;left:1313.40px;transform-origin:0 50%;transform:scaleX(0.815);">レイヤー 80</span>
<div style="left:1200.40px;top:694.60px;width:9.40px;height:8.50px;background:#2a2a2a;border:0.9px solid #1c1c1c;border-radius:1.6px;"></div>
<div style="left:1221.30px;top:694.60px;width:9.40px;height:8.50px;background:#2a2a2a;border:0.9px solid #1c1c1c;border-radius:1.6px;"></div>
<div style="left:1262.00px;top:763.60px;width:96.00px;height:0.90px;background:#141414;"></div>
<div style="left:1268.90px;top:723.80px;width:37.20px;height:37.20px;background:#111;"></div>
<div style="left:1269.80px;top:724.70px;width:35.50px;height:35.40px;background:#c3c3c3;box-shadow:inset 1.4px 0 0 #cfcfcf, inset 0 1.2px 0 #cdcdcd;"></div>
<svg style="left:0.00px;top:0.00px;" width="1440.00" height="809.00" viewBox="0 0 1440 809"><path d="M1270.1 731.7L1275.6 731.9L1276.8 740.7L1278.8 749.7L1283.8 748.7L1291.8 743.7L1296.8 738.3L1305.2 737.7L1305.2 739.1L1297.8 740.2L1292.8 746.2L1284.8 751.7L1277.8 754.2L1274.8 752.7L1271.8 744.7L1270.3 736.7z" fill="#a89cca" stroke="#a89cca" stroke-width="0.6" stroke-linejoin="round"/></svg>
<span class="t" style="top:728.15px;font-size:8.5px;line-height:11.90px;color:#d2d2d2;left:1313.40px;transform-origin:0 50%;transform:scaleX(0.900);">100 % 通常</span>
<span class="t" style="top:751.85px;font-size:8.5px;line-height:11.90px;color:#d2d2d2;left:1313.40px;transform-origin:0 50%;transform:scaleX(0.815);">レイヤー 82</span>
<svg style="left:1198.80px;top:738.70px;" width="12.40" height="7.60" viewBox="0 0 12.4 7.6"><path d="M0.5 4.1C2.4 1.4 4.4 0.6 6.2 0.6C8 0.6 10 1.4 11.9 4.1C10 6.4 8 7.1 6.2 7.1C4.4 7.1 2.4 6.4 0.5 4.1z" fill="none" stroke="#e4e4e4" stroke-width="0.9"/><circle cx="6.2" cy="4" r="2.2" fill="#e4e4e4"/><path d="M1.2 3.2C3.2 1 9.2 1 11.2 3.2" fill="none" stroke="#e4e4e4" stroke-width="1.2"/></svg>
<div style="left:1221.30px;top:737.80px;width:9.40px;height:8.50px;background:#2a2a2a;border:0.9px solid #1c1c1c;border-radius:1.6px;"></div>
<div style="left:1236.00px;top:764.40px;width:122.00px;height:45.00px;background:#434f68;"></div>
<div style="left:1267.10px;top:765.70px;width:41.10px;height:40.20px;background:#0a0a0a;border:1.1px solid #f4f4f4;"></div>
<div style="left:1270.20px;top:768.60px;width:34.90px;height:34.80px;background:#c6c6c6;"></div>
<svg style="left:0.00px;top:0.00px;" width="1440.00" height="809.00" viewBox="0 0 1440 809"><path d="M1280.3 770.0L1284.3999999999999 768.4L1288.8 770.5999999999999C1291.8 777.8 1294.2 789.8 1295.0 801.1999999999999L1290.6 803.0C1288.2 794.8 1283.8 781.8 1280.3 770.0z" fill="#3c1460"/></svg>
<span class="t" style="top:771.35px;font-size:8.5px;line-height:11.90px;color:#d2d2d2;left:1313.40px;transform-origin:0 50%;transform:scaleX(0.900);">100 % 通常</span>
<span class="t" style="top:795.05px;font-size:8.5px;line-height:11.90px;color:#d2d2d2;left:1313.40px;transform-origin:0 50%;transform:scaleX(0.815);">レイヤー 14</span>
<svg style="left:1198.80px;top:781.90px;" width="12.40" height="7.60" viewBox="0 0 12.4 7.6"><path d="M0.5 4.1C2.4 1.4 4.4 0.6 6.2 0.6C8 0.6 10 1.4 11.9 4.1C10 6.4 8 7.1 6.2 7.1C4.4 7.1 2.4 6.4 0.5 4.1z" fill="none" stroke="#e4e4e4" stroke-width="0.9"/><circle cx="6.2" cy="4" r="2.2" fill="#e4e4e4"/><path d="M1.2 3.2C3.2 1 9.2 1 11.2 3.2" fill="none" stroke="#e4e4e4" stroke-width="1.2"/></svg>
<svg style="left:1218.60px;top:779.20px;" width="13.00" height="13.00" viewBox="0 0 13 13"><path d="M3 9.8L4.4 7L10 1.4L11.8 3.2L6.2 8.8z" fill="#e4e4e4"/><path d="M0.6 12h12" stroke="#e4e4e4" stroke-width="1.1"/></svg>
<div style="left:1200.40px;top:355.40px;width:9.40px;height:2.40px;background:#2a2a2a;border:0.9px solid #1c1c1c;border-top:none;border-radius:0 0 1.6px 1.6px;"></div>
<div style="left:1221.30px;top:355.40px;width:9.40px;height:2.40px;background:#2a2a2a;border:0.9px solid #1c1c1c;border-top:none;border-radius:0 0 1.6px 1.6px;"></div>
<div style="left:1366.00px;top:57.40px;width:1.80px;height:752.00px;background:#2c2c2c;"></div>
<div style="left:1367.80px;top:58.50px;width:33.10px;height:59.30px;background:#282828;"></div>
<div style="left:1367.80px;top:62.20px;width:28.90px;height:22.30px;background:#303030;border-radius:0 2px 2px 0;"></div>
<div style="left:1367.80px;top:90.90px;width:28.90px;height:22.80px;background:#303030;border-radius:0 2px 2px 0;"></div>
<div style="left:1368.50px;top:121.30px;width:32.40px;height:30.70px;background:#303030;border-radius:2px;"></div>
<div style="left:1405.20px;top:58.50px;width:32.60px;height:30.10px;background:#303030;border-radius:2px;"></div>
<svg style="left:0.00px;top:0.00px;" width="1440.00" height="809.00" viewBox="0 0 1440 809"><path d="M1383.7 66.6L1389.6 69.9L1383.7 73.2L1377.8 69.9z" fill="none" stroke="#d4d4d4" stroke-width="1" stroke-linejoin="round"/><path d="M1377.8 72.9L1383.7 76.2L1389.6 72.9" fill="none" stroke="#d4d4d4" stroke-width="1" stroke-linejoin="round"/><path d="M1377.8 76.0L1383.7 79.3L1389.6 76.0" fill="none" stroke="#d4d4d4" stroke-width="1" stroke-linejoin="round"/><rect x="1384.4" y="73.4" width="9" height="9" fill="#303030"/><circle cx="1386.8" cy="76" r="1.3" fill="none" stroke="#d4d4d4" stroke-width="0.7"/><circle cx="1390.8" cy="76" r="1.5" fill="#d4d4d4"/><path d="M1385.6 79l2.2 2.2m0-2.2l-2.2 2.2" stroke="#d4d4d4" stroke-width="0.7"/><rect x="1389.6" y="79" width="2.4" height="2.4" fill="none" stroke="#d4d4d4" stroke-width="0.7"/><path d="M1384.4 94.9L1390.8 98.6L1384.4 102.3L1378.0 98.6z" fill="none" stroke="#d4d4d4" stroke-width="1" stroke-linejoin="round"/><path d="M1378.0 102.1L1384.4 105.8L1390.8 102.1" fill="none" stroke="#d4d4d4" stroke-width="1" stroke-linejoin="round"/><path d="M1378.0 105.6L1384.4 109.3L1390.8 105.6" fill="none" stroke="#d4d4d4" stroke-width="1" stroke-linejoin="round"/><circle cx="1384" cy="137" r="6.6" fill="none" stroke="#686868" stroke-width="1.1"/><path d="M1382 135L1391 143.6" stroke="#686868" stroke-width="1.1"/><path d="M1381.4 134.4H1385.4L1381.4 138.4z" fill="#686868"/><path d="M1413.8 80.4V68.6C1413.8 68 1414.2 67.6 1414.8 67.6H1419.4L1420.6 69.4H1427.8C1428.4 69.4 1428.8 69.8 1428.8 70.4V79.4C1428.8 80 1428.4 80.4 1427.8 80.4z" fill="none" stroke="#d4d4d4" stroke-width="1.1"/><path d="M1414 67.8H1419.6V69.4H1414z" fill="#d4d4d4"/><circle cx="1421.4" cy="75" r="3.6" fill="none" stroke="#d4d4d4" stroke-width="0.8"/><path d="M1421.4 75v3.6M1421.4 75l-3-1.8M1421.4 75l3-1.8" stroke="#d4d4d4" stroke-width="0.7"/><path d="M1418.4 73.2L1421.4 71.6L1424.4 73.2" fill="none" stroke="#d4d4d4" stroke-width="0.7"/></svg>
<div style="left:0.00px;top:807.60px;width:1440.00px;height:1.40px;background:#1c1c1c;"></div>
</div></body></html>
